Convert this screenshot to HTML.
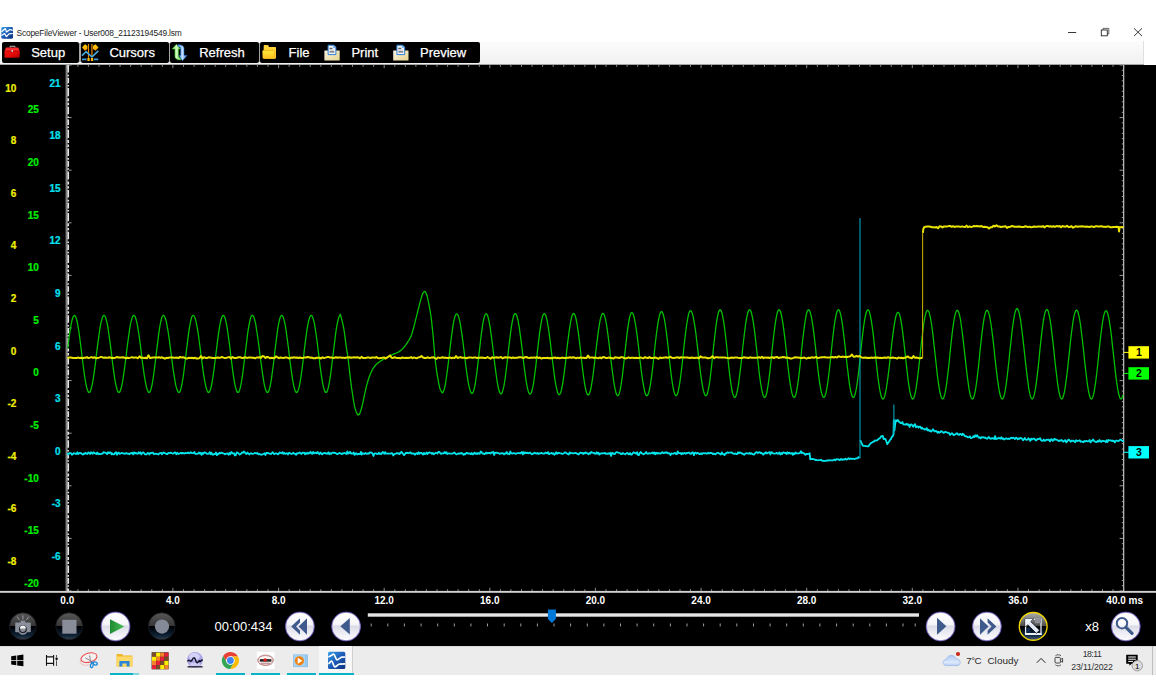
<!DOCTYPE html>
<html lang="en"><head><meta charset="utf-8"><title>ScopeFileViewer - User008_21123194549.lsm</title>
<style>
html,body{margin:0;padding:0;background:#fff;}
body{width:1156px;height:700px;overflow:hidden;position:relative;font-family:"Liberation Sans",sans-serif;}
#root{position:absolute;left:0;top:0;width:1156px;height:700px;overflow:hidden;background:#fff;}
#root div, #root span{position:absolute;white-space:nowrap;}
.tb{background:#000;border-radius:2px;top:1px;height:21px;}
.tbt{color:#fff;font-size:13px;line-height:13px;top:45.8px;-webkit-text-stroke:0.25px #fff;}
.axl{font-weight:bold;font-size:10px;line-height:10px;text-align:right;-webkit-text-stroke:0.2px currentColor;}
.xl{font-weight:bold;font-size:10px;line-height:10px;color:#fff;top:596.2px;text-align:center;width:60px;}
.ul{background:#08b4c4;height:1.6px;top:673px;}
svg{position:absolute;left:0;top:0;}
</style></head><body><div id="root">
<span style="left:16.5px;top:29.2px;font-size:8.4px;line-height:9px;color:#1c1c1c;letter-spacing:-0.18px" id="title">ScopeFileViewer - User008_21123194549.lsm</span>
<div style="left:0;top:41px;width:1142.6px;height:23.5px;background:linear-gradient(#fcfcfc,#f0f0f0);border-right:1px solid #e0e0e0;"></div>
<div style="left:0;top:64.2px;width:1143.6px;height:1px;background:#a4a4a4;"></div>
<div class="tb" style="left:2.0px;width:77.3px;top:42px;height:21px"></div>
<div class="tb" style="left:80.6px;width:88.2px;top:42px;height:21px"></div>
<div class="tb" style="left:170.0px;width:88.5px;top:42px;height:21px"></div>
<div class="tb" style="left:259.8px;width:220.0px;top:42px;height:21px"></div>
<div style="left:79.3px;width:1.3px;top:43px;height:19px;background:#a4a4a4"></div>
<div style="left:168.8px;width:1.2px;top:43px;height:19px;background:#a4a4a4"></div>
<div style="left:258.5px;width:1.3px;top:43px;height:19px;background:#a4a4a4"></div>
<span class="tbt" style="left:31.2px">Setup</span>
<span class="tbt" style="left:109.4px">Cursors</span>
<span class="tbt" style="left:199.2px">Refresh</span>
<span class="tbt" style="left:288.6px">File</span>
<span class="tbt" style="left:351.4px">Print</span>
<span class="tbt" style="left:420.0px">Preview</span>
<div style="left:0;top:65px;width:1156px;height:581px;background:#000;"></div>
<div style="left:0;top:646px;width:1156px;height:28.6px;background:#ececec;"></div>
<div style="left:0;top:646px;width:1156px;height:1px;background:#dcdcdc;"></div>
<div style="left:319px;top:646px;width:32.5px;height:28.6px;background:#f7f7f7;border-right:1px solid #d0d0d0;"></div>
<div class="ul" style="left:109.8px;width:28.8px"></div>
<div class="ul" style="left:215.9px;width:28.9px"></div>
<div class="ul" style="left:251.3px;width:28.8px"></div>
<div class="ul" style="left:286.9px;width:28.8px"></div>
<div class="ul" style="left:319.0px;width:34.7px"></div>
<div class="ul" style="left:133px;width:5.6px;background:#7fd8e0"></div>
<div style="left:1152px;top:646px;width:1px;height:28.6px;background:#bdbdbd;"></div>
<span class="axl" style="left:-23.6px;width:40px;top:83.5px;color:#f0f000">10</span>
<span class="axl" style="left:-23.6px;width:40px;top:136.1px;color:#f0f000">8</span>
<span class="axl" style="left:-23.6px;width:40px;top:188.7px;color:#f0f000">6</span>
<span class="axl" style="left:-23.6px;width:40px;top:241.3px;color:#f0f000">4</span>
<span class="axl" style="left:-23.6px;width:40px;top:293.9px;color:#f0f000">2</span>
<span class="axl" style="left:-23.6px;width:40px;top:346.5px;color:#f0f000">0</span>
<span class="axl" style="left:-23.6px;width:40px;top:399.1px;color:#f0f000">-2</span>
<span class="axl" style="left:-23.6px;width:40px;top:451.7px;color:#f0f000">-4</span>
<span class="axl" style="left:-23.6px;width:40px;top:504.3px;color:#f0f000">-6</span>
<span class="axl" style="left:-23.6px;width:40px;top:556.9px;color:#f0f000">-8</span>
<span class="axl" style="left:-1.2px;width:40px;top:105.3px;color:#00f000">25</span>
<span class="axl" style="left:-1.2px;width:40px;top:157.9px;color:#00f000">20</span>
<span class="axl" style="left:-1.2px;width:40px;top:210.5px;color:#00f000">15</span>
<span class="axl" style="left:-1.2px;width:40px;top:263.1px;color:#00f000">10</span>
<span class="axl" style="left:-1.2px;width:40px;top:315.7px;color:#00f000">5</span>
<span class="axl" style="left:-1.2px;width:40px;top:368.3px;color:#00f000">0</span>
<span class="axl" style="left:-1.2px;width:40px;top:420.9px;color:#00f000">-5</span>
<span class="axl" style="left:-1.2px;width:40px;top:473.5px;color:#00f000">-10</span>
<span class="axl" style="left:-1.2px;width:40px;top:526.1px;color:#00f000">-15</span>
<span class="axl" style="left:-1.2px;width:40px;top:578.7px;color:#00f000">-20</span>
<span class="axl" style="left:20.6px;width:40px;top:78.5px;color:#00e0f0">21</span>
<span class="axl" style="left:20.6px;width:40px;top:131.1px;color:#00e0f0">18</span>
<span class="axl" style="left:20.6px;width:40px;top:183.7px;color:#00e0f0">15</span>
<span class="axl" style="left:20.6px;width:40px;top:236.3px;color:#00e0f0">12</span>
<span class="axl" style="left:20.6px;width:40px;top:288.9px;color:#00e0f0">9</span>
<span class="axl" style="left:20.6px;width:40px;top:341.5px;color:#00e0f0">6</span>
<span class="axl" style="left:20.6px;width:40px;top:394.1px;color:#00e0f0">3</span>
<span class="axl" style="left:20.6px;width:40px;top:446.7px;color:#00e0f0">0</span>
<span class="axl" style="left:20.6px;width:40px;top:499.3px;color:#00e0f0">-3</span>
<span class="axl" style="left:20.6px;width:40px;top:551.9px;color:#00e0f0">-6</span>
<span class="xl" style="left:37.3px">0.0</span>
<span class="xl" style="left:142.9px">4.0</span>
<span class="xl" style="left:248.6px">8.0</span>
<span class="xl" style="left:354.2px">12.0</span>
<span class="xl" style="left:459.8px">16.0</span>
<span class="xl" style="left:565.4px">20.0</span>
<span class="xl" style="left:671.1px">24.0</span>
<span class="xl" style="left:776.7px">28.0</span>
<span class="xl" style="left:882.3px">32.0</span>
<span class="xl" style="left:988.0px">36.0</span>
<span class="xl" style="left:1084.7px;width:80px">40.0 ms</span>
<span style="left:214.6px;top:620.4px;font-size:13px;line-height:13px;color:#fff">00:00:434</span>
<span style="left:1085.2px;top:620.4px;font-size:13px;line-height:13px;color:#fff">x8</span>
<span id="wx1" style="left:966.3px;top:655.7px;font-size:9.8px;line-height:10px;color:#2a2a2a;letter-spacing:-0.55px">7°C</span>
<span id="wx2" style="left:987.4px;top:655.7px;font-size:9.9px;line-height:10px;color:#2a2a2a;letter-spacing:0.08px">Cloudy</span>
<span id="clk" style="left:1062px;width:60px;text-align:center;top:649.5px;font-size:8.7px;line-height:9px;color:#303030;letter-spacing:-0.52px">18:11</span>
<span id="dat" style="left:1062px;width:60px;text-align:center;top:662.9px;font-size:8.7px;line-height:9px;color:#303030;letter-spacing:-0.13px">23/11/2022</span>
<svg width="1156" height="700" viewBox="0 0 1156 700">
<defs>
<linearGradient id="gw" x1="0" y1="0" x2="0" y2="1"><stop offset="0" stop-color="#ffffff"/><stop offset="0.42" stop-color="#f6f6fa"/><stop offset="0.5" stop-color="#dcdce8"/><stop offset="0.62" stop-color="#e6e6f0"/><stop offset="1" stop-color="#fdfdff"/></linearGradient>
<linearGradient id="gd" x1="0" y1="0" x2="0" y2="1"><stop offset="0" stop-color="#585858"/><stop offset="0.49" stop-color="#363636"/><stop offset="0.51" stop-color="#000"/><stop offset="0.62" stop-color="#020a14"/><stop offset="0.86" stop-color="#0e2438"/><stop offset="1" stop-color="#38424e"/></linearGradient>
<linearGradient id="gd2" x1="0" y1="0" x2="0" y2="1"><stop offset="0" stop-color="#b0b0b0"/><stop offset="0.48" stop-color="#4c4c4c"/><stop offset="0.5" stop-color="#000"/><stop offset="0.62" stop-color="#000a18"/><stop offset="0.85" stop-color="#14304e"/><stop offset="1" stop-color="#50607a"/></linearGradient>
<linearGradient id="gtray" x1="0" y1="0" x2="1" y2="1"><stop offset="0" stop-color="#fbf6e6"/><stop offset="0.5" stop-color="#f0e4b8"/><stop offset="1" stop-color="#e4d48c"/></linearGradient>
<linearGradient id="gdia" x1="0" y1="0" x2="0" y2="1"><stop offset="0" stop-color="#ffd800"/><stop offset="1" stop-color="#ff9400"/></linearGradient>
<linearGradient id="ggr" x1="0" y1="0" x2="1" y2="0"><stop offset="0" stop-color="#58d838"/><stop offset="0.5" stop-color="#d4fcc0"/><stop offset="1" stop-color="#58d038"/></linearGradient>
<linearGradient id="gbl" x1="0" y1="0" x2="1" y2="0"><stop offset="0" stop-color="#3a92f0"/><stop offset="0.5" stop-color="#c4deff"/><stop offset="1" stop-color="#3a8af0"/></linearGradient>
<linearGradient id="gredh" x1="0" y1="0" x2="1" y2="1"><stop offset="0" stop-color="#f41414"/><stop offset="0.6" stop-color="#e00808"/><stop offset="1" stop-color="#a40000"/></linearGradient>
<linearGradient id="gcloud" x1="0" y1="0" x2="0" y2="1"><stop offset="0" stop-color="#b0c8f2"/><stop offset="0.7" stop-color="#dde9fb"/><stop offset="1" stop-color="#b4ccf4"/></linearGradient>
<linearGradient id="gg" x1="0" y1="0" x2="1" y2="0"><stop offset="0" stop-color="#1f8a30"/><stop offset="1" stop-color="#46c058"/></linearGradient>
<linearGradient id="gapp" x1="0" y1="0" x2="1" y2="1"><stop offset="0" stop-color="#3aa0e8"/><stop offset="0.5" stop-color="#1c5cb8"/><stop offset="1" stop-color="#10307c"/></linearGradient>
<linearGradient id="gfold" x1="0" y1="0" x2="0" y2="1"><stop offset="0" stop-color="#ffec3c"/><stop offset="1" stop-color="#ffbc1c"/></linearGradient>
<linearGradient id="gred" x1="0" y1="0" x2="0" y2="1"><stop offset="0" stop-color="#ff3030"/><stop offset="1" stop-color="#b00000"/></linearGradient>
</defs>
<path d="M67.3 65V68.2M67.3 591V587.8M77.9 65V66.8M77.9 591V589.2M88.4 65V66.8M88.4 591V589.2M99.0 65V66.8M99.0 591V589.2M109.6 65V66.8M109.6 591V589.2M120.1 65V66.8M120.1 591V589.2M130.7 65V66.8M130.7 591V589.2M141.2 65V66.8M141.2 591V589.2M151.8 65V66.8M151.8 591V589.2M162.4 65V66.8M162.4 591V589.2M172.9 65V68.2M172.9 591V587.8M183.5 65V66.8M183.5 591V589.2M194.1 65V66.8M194.1 591V589.2M204.6 65V66.8M204.6 591V589.2M215.2 65V66.8M215.2 591V589.2M225.7 65V66.8M225.7 591V589.2M236.3 65V66.8M236.3 591V589.2M246.9 65V66.8M246.9 591V589.2M257.4 65V66.8M257.4 591V589.2M268.0 65V66.8M268.0 591V589.2M278.6 65V68.2M278.6 591V587.8M289.1 65V66.8M289.1 591V589.2M299.7 65V66.8M299.7 591V589.2M310.2 65V66.8M310.2 591V589.2M320.8 65V66.8M320.8 591V589.2M331.4 65V66.8M331.4 591V589.2M341.9 65V66.8M341.9 591V589.2M352.5 65V66.8M352.5 591V589.2M363.1 65V66.8M363.1 591V589.2M373.6 65V66.8M373.6 591V589.2M384.2 65V68.2M384.2 591V587.8M394.8 65V66.8M394.8 591V589.2M405.3 65V66.8M405.3 591V589.2M415.9 65V66.8M415.9 591V589.2M426.4 65V66.8M426.4 591V589.2M437.0 65V66.8M437.0 591V589.2M447.6 65V66.8M447.6 591V589.2M458.1 65V66.8M458.1 591V589.2M468.7 65V66.8M468.7 591V589.2M479.3 65V66.8M479.3 591V589.2M489.8 65V68.2M489.8 591V587.8M500.4 65V66.8M500.4 591V589.2M510.9 65V66.8M510.9 591V589.2M521.5 65V66.8M521.5 591V589.2M532.1 65V66.8M532.1 591V589.2M542.6 65V66.8M542.6 591V589.2M553.2 65V66.8M553.2 591V589.2M563.8 65V66.8M563.8 591V589.2M574.3 65V66.8M574.3 591V589.2M584.9 65V66.8M584.9 591V589.2M595.4 65V68.2M595.4 591V587.8M606.0 65V66.8M606.0 591V589.2M616.6 65V66.8M616.6 591V589.2M627.1 65V66.8M627.1 591V589.2M637.7 65V66.8M637.7 591V589.2M648.3 65V66.8M648.3 591V589.2M658.8 65V66.8M658.8 591V589.2M669.4 65V66.8M669.4 591V589.2M680.0 65V66.8M680.0 591V589.2M690.5 65V66.8M690.5 591V589.2M701.1 65V68.2M701.1 591V587.8M711.6 65V66.8M711.6 591V589.2M722.2 65V66.8M722.2 591V589.2M732.8 65V66.8M732.8 591V589.2M743.3 65V66.8M743.3 591V589.2M753.9 65V66.8M753.9 591V589.2M764.5 65V66.8M764.5 591V589.2M775.0 65V66.8M775.0 591V589.2M785.6 65V66.8M785.6 591V589.2M796.1 65V66.8M796.1 591V589.2M806.7 65V68.2M806.7 591V587.8M817.3 65V66.8M817.3 591V589.2M827.8 65V66.8M827.8 591V589.2M838.4 65V66.8M838.4 591V589.2M849.0 65V66.8M849.0 591V589.2M859.5 65V66.8M859.5 591V589.2M870.1 65V66.8M870.1 591V589.2M880.7 65V66.8M880.7 591V589.2M891.2 65V66.8M891.2 591V589.2M901.8 65V66.8M901.8 591V589.2M912.3 65V68.2M912.3 591V587.8M922.9 65V66.8M922.9 591V589.2M933.5 65V66.8M933.5 591V589.2M944.0 65V66.8M944.0 591V589.2M954.6 65V66.8M954.6 591V589.2M965.2 65V66.8M965.2 591V589.2M975.7 65V66.8M975.7 591V589.2M986.3 65V66.8M986.3 591V589.2M996.8 65V66.8M996.8 591V589.2M1007.4 65V66.8M1007.4 591V589.2M1018.0 65V68.2M1018.0 591V587.8M1028.5 65V66.8M1028.5 591V589.2M1039.1 65V66.8M1039.1 591V589.2M1049.7 65V66.8M1049.7 591V589.2M1060.2 65V66.8M1060.2 591V589.2M1070.8 65V66.8M1070.8 591V589.2M1081.3 65V66.8M1081.3 591V589.2M1091.9 65V66.8M1091.9 591V589.2M1102.5 65V66.8M1102.5 591V589.2M1113.0 65V66.8M1113.0 591V589.2M1123.6 65V68.2M1123.6 591V587.8" stroke="#8a8a8a" stroke-width="1" fill="none"/>
<path d="M1123.6 65.0H1119.6M1123.6 70.3H1121.8M1123.6 75.5H1121.8M1123.6 80.8H1121.8M1123.6 86.0H1121.8M1123.6 91.3H1121.8M1123.6 96.6H1121.8M1123.6 101.8H1121.8M1123.6 107.1H1121.8M1123.6 112.3H1121.8M1123.6 117.6H1119.6M1123.6 122.9H1121.8M1123.6 128.1H1121.8M1123.6 133.4H1121.8M1123.6 138.6H1121.8M1123.6 143.9H1121.8M1123.6 149.2H1121.8M1123.6 154.4H1121.8M1123.6 159.7H1121.8M1123.6 164.9H1121.8M1123.6 170.2H1119.6M1123.6 175.5H1121.8M1123.6 180.7H1121.8M1123.6 186.0H1121.8M1123.6 191.2H1121.8M1123.6 196.5H1121.8M1123.6 201.8H1121.8M1123.6 207.0H1121.8M1123.6 212.3H1121.8M1123.6 217.5H1121.8M1123.6 222.8H1119.6M1123.6 228.1H1121.8M1123.6 233.3H1121.8M1123.6 238.6H1121.8M1123.6 243.8H1121.8M1123.6 249.1H1121.8M1123.6 254.4H1121.8M1123.6 259.6H1121.8M1123.6 264.9H1121.8M1123.6 270.1H1121.8M1123.6 275.4H1119.6M1123.6 280.7H1121.8M1123.6 285.9H1121.8M1123.6 291.2H1121.8M1123.6 296.4H1121.8M1123.6 301.7H1121.8M1123.6 307.0H1121.8M1123.6 312.2H1121.8M1123.6 317.5H1121.8M1123.6 322.7H1121.8M1123.6 328.0H1119.6M1123.6 333.3H1121.8M1123.6 338.5H1121.8M1123.6 343.8H1121.8M1123.6 349.0H1121.8M1123.6 354.3H1121.8M1123.6 359.6H1121.8M1123.6 364.8H1121.8M1123.6 370.1H1121.8M1123.6 375.3H1121.8M1123.6 380.6H1119.6M1123.6 385.9H1121.8M1123.6 391.1H1121.8M1123.6 396.4H1121.8M1123.6 401.6H1121.8M1123.6 406.9H1121.8M1123.6 412.2H1121.8M1123.6 417.4H1121.8M1123.6 422.7H1121.8M1123.6 427.9H1121.8M1123.6 433.2H1119.6M1123.6 438.5H1121.8M1123.6 443.7H1121.8M1123.6 449.0H1121.8M1123.6 454.2H1121.8M1123.6 459.5H1121.8M1123.6 464.8H1121.8M1123.6 470.0H1121.8M1123.6 475.3H1121.8M1123.6 480.5H1121.8M1123.6 485.8H1119.6M1123.6 491.1H1121.8M1123.6 496.3H1121.8M1123.6 501.6H1121.8M1123.6 506.8H1121.8M1123.6 512.1H1121.8M1123.6 517.4H1121.8M1123.6 522.6H1121.8M1123.6 527.9H1121.8M1123.6 533.1H1121.8M1123.6 538.4H1119.6M1123.6 543.7H1121.8M1123.6 548.9H1121.8M1123.6 554.2H1121.8M1123.6 559.4H1121.8M1123.6 564.7H1121.8M1123.6 570.0H1121.8M1123.6 575.2H1121.8M1123.6 580.5H1121.8M1123.6 585.7H1121.8M1123.6 591.0H1119.6" stroke="#9a9a9a" stroke-width="1" fill="none"/>
<rect x="1123" y="65" width="1.3" height="527" fill="#b4b4b4"/>
<rect x="65.6" y="65" width="1.1" height="527" fill="#8a8a8a"/>
<rect x="66.7" y="65" width="0.8" height="527" fill="#c8c8c8"/>
<path d="M68.25 65.0V72.5M68.25 74.7V76.3M68.25 77.7V83.3M68.25 84.9V86.4M68.25 88.0V96.2M68.25 98.2V101.2M68.25 102.8V105.2M68.25 106.7V114.2M68.25 116.4V118.0M68.25 119.4V125.0M68.25 126.6V128.1M68.25 129.7V137.9M68.25 139.9V142.9M68.25 144.5V146.9M68.25 148.4V155.9M68.25 158.1V159.7M68.25 161.1V166.7M68.25 168.3V169.8M68.25 171.4V179.6M68.25 181.6V184.6M68.25 186.2V188.6M68.25 190.1V197.6M68.25 199.8V201.4M68.25 202.8V208.4M68.25 210.0V211.5M68.25 213.1V221.3M68.25 223.3V226.3M68.25 227.9V230.3M68.25 231.8V239.3M68.25 241.5V243.1M68.25 244.5V250.1M68.25 251.7V253.2M68.25 254.8V263.0M68.25 265.0V268.0M68.25 269.6V272.0M68.25 273.5V281.0M68.25 283.2V284.8M68.25 286.2V291.8M68.25 293.4V294.9M68.25 296.5V304.7M68.25 306.7V309.7M68.25 311.3V313.7M68.25 315.2V322.7M68.25 324.9V326.5M68.25 327.9V333.5M68.25 335.1V336.6M68.25 338.2V346.4M68.25 348.4V351.4M68.25 353.0V355.4M68.25 356.9V364.4M68.25 366.6V368.2M68.25 369.6V375.2M68.25 376.8V378.3M68.25 379.9V388.1M68.25 390.1V393.1M68.25 394.7V397.1M68.25 398.6V406.1M68.25 408.3V409.9M68.25 411.3V416.9M68.25 418.5V420.0M68.25 421.6V429.8M68.25 431.8V434.8M68.25 436.4V438.8M68.25 440.3V447.8M68.25 450.0V451.6M68.25 453.0V458.6M68.25 460.2V461.7M68.25 463.3V471.5M68.25 473.5V476.5M68.25 478.1V480.5M68.25 482.0V489.5M68.25 491.7V493.3M68.25 494.7V500.3M68.25 501.9V503.4M68.25 505.0V513.2M68.25 515.2V518.2M68.25 519.8V522.2M68.25 523.7V531.2M68.25 533.4V535.0M68.25 536.4V542.0M68.25 543.6V545.1M68.25 546.7V554.9M68.25 556.9V559.9M68.25 561.5V563.9M68.25 565.4V572.9M68.25 575.1V576.7M68.25 578.1V583.7M68.25 585.3V586.8M68.25 588.4V591.0" stroke="#e4e4e4" stroke-width="1.6" fill="none"/>
<path d="M69 65.0H71.6M69 117.6H71.6M69 170.2H71.6M69 222.8H71.6M69 275.4H71.6M69 328.0H71.6M69 380.6H71.6M69 433.2H71.6M69 485.8H71.6M69 538.4H71.6M69 591.0H71.6" stroke="#999" stroke-width="1" fill="none"/>
<rect x="0" y="590.9" width="1156" height="1.9" fill="#d2d2d2"/>
<path d="M67.7 348.4 L68.4 343.0 L69.0 337.9 L69.7 333.0 L70.4 328.6 L71.1 324.7 L71.8 321.4 L72.4 318.8 L73.1 316.9 L73.8 315.7 L74.5 315.3 L75.1 315.7 L75.8 317.0 L76.5 319.1 L77.2 322.0 L77.9 325.6 L78.6 329.8 L79.3 334.6 L80.0 339.8 L80.7 345.3 L81.4 351.0 L82.1 356.8 L82.8 362.5 L83.5 368.0 L84.2 373.2 L84.9 378.0 L85.6 382.2 L86.3 385.8 L87.0 388.7 L87.7 390.8 L88.4 392.1 L89.1 392.5 L89.8 392.1 L90.5 390.9 L91.1 389.0 L91.8 386.4 L92.5 383.1 L93.2 379.2 L93.8 374.8 L94.5 369.9 L95.2 364.8 L95.9 359.4 L96.5 353.9 L97.2 348.4 L97.9 343.0 L98.6 337.9 L99.3 333.0 L99.9 328.6 L100.6 324.7 L101.3 321.4 L102.0 318.8 L102.6 316.9 L103.3 315.7 L104.0 315.3 L104.7 315.7 L105.4 316.9 L106.0 318.8 L106.7 321.4 L107.4 324.7 L108.1 328.6 L108.7 333.0 L109.4 337.9 L110.1 343.0 L110.8 348.4 L111.5 353.9 L112.1 359.4 L112.8 364.8 L113.5 369.9 L114.2 374.8 L114.8 379.2 L115.5 383.1 L116.2 386.4 L116.9 389.0 L117.5 390.9 L118.2 392.1 L118.9 392.5 L119.6 392.1 L120.3 390.9 L120.9 389.0 L121.6 386.4 L122.3 383.1 L123.0 379.2 L123.6 374.8 L124.3 369.9 L125.0 364.8 L125.7 359.4 L126.4 353.9 L127.0 348.4 L127.7 343.0 L128.4 337.9 L129.1 333.0 L129.7 328.6 L130.4 324.7 L131.1 321.4 L131.8 318.8 L132.4 316.9 L133.1 315.7 L133.8 315.3 L134.5 315.7 L135.2 316.9 L135.9 318.8 L136.6 321.4 L137.3 324.7 L138.0 328.6 L138.7 333.0 L139.4 337.9 L140.1 343.0 L140.8 348.4 L141.4 353.9 L142.1 359.4 L142.8 364.8 L143.5 369.9 L144.2 374.8 L144.9 379.2 L145.6 383.1 L146.3 386.4 L147.0 389.0 L147.7 390.9 L148.4 392.1 L149.1 392.5 L149.8 392.1 L150.5 390.8 L151.1 388.7 L151.8 385.8 L152.5 382.2 L153.2 378.0 L153.9 373.2 L154.5 368.0 L155.2 362.5 L155.9 356.8 L156.6 351.0 L157.3 345.3 L158.0 339.8 L158.6 334.6 L159.3 329.8 L160.0 325.6 L160.7 322.0 L161.4 319.1 L162.0 317.0 L162.7 315.7 L163.4 315.3 L164.1 315.7 L164.7 316.7 L165.4 318.5 L166.1 320.9 L166.8 324.0 L167.4 327.6 L168.1 331.6 L168.8 336.1 L169.5 341.0 L170.1 346.0 L170.8 351.3 L171.5 356.5 L172.2 361.8 L172.8 366.8 L173.5 371.7 L174.2 376.2 L174.9 380.2 L175.5 383.8 L176.2 386.9 L176.9 389.3 L177.6 391.1 L178.2 392.1 L178.9 392.5 L179.6 392.1 L180.3 390.8 L180.9 388.7 L181.6 385.8 L182.3 382.2 L183.0 378.0 L183.7 373.2 L184.3 368.0 L185.0 362.5 L185.7 356.8 L186.4 351.0 L187.1 345.3 L187.8 339.8 L188.4 334.6 L189.1 329.8 L189.8 325.6 L190.5 322.0 L191.2 319.1 L191.8 317.0 L192.5 315.7 L193.2 315.3 L193.9 315.7 L194.5 316.7 L195.2 318.5 L195.9 320.9 L196.5 324.0 L197.2 327.6 L197.9 331.6 L198.6 336.1 L199.2 341.0 L199.9 346.0 L200.6 351.3 L201.2 356.5 L201.9 361.8 L202.6 366.8 L203.2 371.7 L203.9 376.2 L204.6 380.2 L205.3 383.8 L205.9 386.9 L206.6 389.3 L207.3 391.1 L207.9 392.1 L208.6 392.5 L209.3 392.1 L210.0 390.8 L210.7 388.7 L211.4 385.8 L212.1 382.2 L212.8 378.0 L213.5 373.2 L214.2 368.0 L214.9 362.5 L215.6 356.8 L216.3 351.0 L217.0 345.3 L217.7 339.8 L218.4 334.6 L219.1 329.8 L219.8 325.6 L220.5 322.0 L221.2 319.1 L221.9 317.0 L222.6 315.7 L223.2 315.3 L223.9 315.7 L224.6 316.9 L225.3 318.8 L225.9 321.4 L226.6 324.7 L227.3 328.6 L227.9 333.0 L228.6 337.9 L229.3 343.0 L230.0 348.4 L230.6 353.9 L231.3 359.4 L232.0 364.8 L232.6 369.9 L233.3 374.8 L234.0 379.2 L234.6 383.1 L235.3 386.4 L236.0 389.0 L236.7 390.9 L237.3 392.1 L238.0 392.5 L238.7 392.1 L239.4 390.8 L240.0 388.7 L240.7 385.8 L241.4 382.2 L242.1 378.0 L242.8 373.2 L243.4 368.0 L244.1 362.5 L244.8 356.8 L245.5 351.0 L246.2 345.3 L246.9 339.8 L247.5 334.6 L248.2 329.8 L248.9 325.6 L249.6 322.0 L250.3 319.1 L250.9 317.0 L251.6 315.7 L252.3 315.3 L253.0 315.7 L253.7 316.9 L254.4 318.8 L255.1 321.4 L255.8 324.7 L256.4 328.6 L257.1 333.0 L257.8 337.9 L258.5 343.0 L259.2 348.4 L259.9 353.9 L260.6 359.4 L261.3 364.8 L262.0 369.9 L262.7 374.8 L263.4 379.2 L264.0 383.1 L264.7 386.4 L265.4 389.0 L266.1 390.9 L266.8 392.1 L267.5 392.5 L268.2 392.1 L268.9 390.8 L269.5 388.7 L270.2 385.8 L270.9 382.2 L271.6 378.0 L272.2 373.2 L272.9 368.0 L273.6 362.5 L274.3 356.8 L274.9 351.0 L275.6 345.3 L276.3 339.8 L277.0 334.6 L277.6 329.8 L278.3 325.6 L279.0 322.0 L279.7 319.1 L280.3 317.0 L281.0 315.7 L281.7 315.3 L282.4 315.7 L283.1 316.9 L283.7 318.8 L284.4 321.4 L285.1 324.7 L285.8 328.6 L286.4 333.0 L287.1 337.9 L287.8 343.0 L288.5 348.4 L289.1 353.9 L289.8 359.4 L290.5 364.8 L291.2 369.9 L291.9 374.8 L292.5 379.2 L293.2 383.1 L293.9 386.4 L294.6 389.0 L295.2 390.9 L295.9 392.1 L296.6 392.5 L297.3 392.1 L298.0 390.8 L298.7 388.7 L299.4 385.8 L300.1 382.2 L300.8 378.0 L301.5 373.2 L302.2 368.0 L302.9 362.5 L303.6 356.8 L304.2 351.0 L304.9 345.3 L305.6 339.8 L306.3 334.6 L307.0 329.8 L307.7 325.6 L308.4 322.0 L309.1 319.1 L309.8 317.0 L310.5 315.7 L311.2 315.3 L311.9 315.7 L312.5 316.9 L313.2 318.8 L313.9 321.4 L314.6 324.7 L315.2 328.6 L315.9 333.0 L316.6 337.9 L317.3 343.0 L317.9 348.4 L318.6 353.9 L319.3 359.4 L319.9 364.8 L320.6 369.9 L321.3 374.8 L322.0 379.2 L322.6 383.1 L323.3 386.4 L324.0 389.0 L324.7 390.9 L325.3 392.1 L326.0 392.5 L326.7 392.1 L327.4 390.8 L328.0 388.7 L328.7 385.8 L329.4 382.2 L330.1 378.0 L330.8 373.2 L331.4 368.0 L332.1 362.5 L332.8 356.8 L333.5 351.0 L334.2 345.3 L334.9 339.8 L335.5 334.6 L336.2 329.8 L336.9 325.6 L337.6 322.0 L338.3 319.1 L338.9 317.0 L339.6 315.7 L340.3 314.2 L340.7 315.5 L341.1 317.2 L341.7 319.3 L342.3 321.6 L342.9 324.2 L343.5 327.0 L344.0 330.2 L344.6 333.9 L345.1 337.9 L345.6 341.8 L346.1 345.4 L346.5 348.4 L346.8 350.5 L347.1 351.8 L347.2 352.8 L347.4 353.8 L347.7 355.3 L348.0 357.7 L348.4 361.1 L348.9 365.3 L349.4 369.9 L349.9 374.7 L350.5 379.4 L351.0 383.6 L351.5 387.5 L352.1 391.4 L352.7 395.1 L353.2 398.6 L353.7 401.7 L354.2 404.3 L354.6 406.4 L355.0 408.0 L355.3 409.3 L355.6 410.3 L356.0 411.1 L356.3 412.0 L356.6 412.8 L357.0 413.6 L357.3 414.2 L357.6 414.6 L358.0 414.9 L358.3 415.0 L358.6 414.9 L359.0 414.6 L359.3 414.2 L359.6 413.6 L360.0 412.8 L360.3 412.0 L360.6 411.1 L360.9 410.2 L361.3 409.1 L361.6 407.9 L362.0 406.3 L362.5 404.3 L363.1 401.7 L363.7 398.6 L364.4 395.2 L365.2 391.8 L365.9 388.5 L366.6 385.6 L367.3 383.1 L368.0 380.8 L368.6 378.7 L369.3 376.7 L370.0 374.9 L370.7 373.2 L371.4 371.7 L372.1 370.3 L372.7 369.1 L373.4 368.0 L374.1 367.0 L374.9 366.0 L375.7 365.1 L376.5 364.2 L377.3 363.5 L378.2 362.8 L379.1 362.1 L380.0 361.4 L381.0 360.7 L382.0 360.1 L383.1 359.5 L384.2 358.9 L385.2 358.3 L386.3 357.7 L387.3 357.1 L388.4 356.6 L389.4 356.1 L390.4 355.6 L391.5 355.1 L392.5 354.6 L393.6 354.1 L394.6 353.7 L395.7 353.3 L396.8 352.8 L397.8 352.4 L398.7 351.9 L399.5 351.4 L400.3 350.9 L400.9 350.3 L401.6 349.7 L402.2 349.1 L402.9 348.4 L403.6 347.7 L404.3 346.9 L405.0 346.0 L405.6 345.2 L406.3 344.2 L407.0 343.2 L407.7 342.1 L408.4 341.0 L409.1 339.9 L409.8 338.6 L410.5 337.3 L411.1 335.9 L411.7 334.4 L412.2 332.8 L412.7 331.1 L413.2 329.3 L413.7 327.5 L414.2 325.6 L414.7 323.6 L415.2 321.6 L415.7 319.5 L416.3 317.3 L416.8 315.2 L417.3 313.1 L417.8 311.0 L418.4 308.7 L419.0 306.5 L419.5 304.4 L420.0 302.4 L420.5 300.7 L420.9 299.2 L421.3 297.9 L421.6 296.8 L421.9 295.8 L422.2 294.9 L422.5 294.1 L422.9 293.4 L423.2 292.7 L423.6 292.2 L423.9 291.8 L424.3 291.5 L424.6 291.4 L424.9 291.4 L425.2 291.6 L425.4 292.0 L425.7 292.4 L425.9 292.9 L426.2 293.5 L426.4 294.0 L426.6 294.6 L426.9 295.1 L427.1 295.9 L427.4 297.0 L427.7 298.6 L428.1 300.7 L428.7 303.2 L429.2 306.1 L429.8 309.1 L430.3 312.2 L430.8 315.2 L431.2 318.1 L431.6 321.1 L431.9 324.1 L432.2 327.2 L432.6 330.5 L432.9 333.9 L433.3 337.7 L433.6 341.8 L434.0 346.0 L434.3 350.2 L434.7 354.2 L435.0 357.7 L435.3 360.8 L435.6 363.5 L436.0 366.0 L436.3 368.4 L436.6 370.8 L437.0 373.2 L437.4 375.8 L437.9 378.5 L438.3 381.1 L438.8 383.6 L439.3 385.8 L439.7 387.7 L440.2 389.2 L440.6 390.3 L441.1 391.2 L441.6 391.9 L441.9 392.4 L442.2 392.9 L442.9 392.5 L443.6 391.1 L444.3 389.0 L445.0 386.0 L445.7 382.3 L446.3 378.0 L447.0 373.1 L447.7 367.8 L448.4 362.2 L449.1 356.3 L449.8 350.4 L450.5 344.5 L451.2 338.9 L451.9 333.6 L452.6 328.7 L453.2 324.4 L453.9 320.7 L454.6 317.7 L455.3 315.6 L456.0 314.2 L456.7 313.8 L457.4 314.2 L458.1 315.4 L458.8 317.4 L459.5 320.1 L460.2 323.5 L460.9 327.6 L461.6 332.1 L462.3 337.1 L463.0 342.4 L463.7 348.0 L464.4 353.6 L465.0 359.3 L465.7 364.9 L466.4 370.2 L467.1 375.2 L467.8 379.7 L468.5 383.8 L469.2 387.2 L469.9 389.9 L470.6 391.9 L471.3 393.1 L472.0 393.5 L472.7 393.1 L473.3 391.7 L474.0 389.5 L474.7 386.6 L475.4 382.9 L476.0 378.5 L476.7 373.6 L477.4 368.2 L478.0 362.5 L478.7 356.6 L479.4 350.6 L480.1 344.7 L480.7 339.0 L481.4 333.7 L482.1 328.7 L482.7 324.4 L483.4 320.6 L484.1 317.7 L484.8 315.5 L485.4 314.2 L486.1 313.7 L486.8 314.1 L487.5 315.3 L488.1 317.3 L488.8 320.1 L489.5 323.5 L490.2 327.6 L490.8 332.1 L491.5 337.1 L492.2 342.5 L492.9 348.1 L493.6 353.8 L494.2 359.5 L494.9 365.1 L495.6 370.4 L496.3 375.5 L496.9 380.0 L497.6 384.1 L498.3 387.5 L499.0 390.3 L499.6 392.3 L500.3 393.5 L501.0 393.9 L501.7 393.4 L502.4 392.1 L503.0 389.9 L503.7 386.9 L504.4 383.2 L505.1 378.8 L505.7 373.8 L506.4 368.4 L507.1 362.7 L507.8 356.8 L508.4 350.8 L509.1 344.8 L509.8 339.1 L510.5 333.7 L511.1 328.7 L511.8 324.3 L512.5 320.6 L513.2 317.6 L513.8 315.4 L514.5 314.1 L515.2 313.6 L515.9 314.0 L516.6 315.3 L517.2 317.3 L517.9 320.0 L518.6 323.5 L519.3 327.6 L519.9 332.2 L520.6 337.2 L521.3 342.6 L522.0 348.2 L522.7 353.9 L523.3 359.7 L524.0 365.3 L524.7 370.7 L525.4 375.7 L526.0 380.3 L526.7 384.4 L527.4 387.9 L528.1 390.6 L528.7 392.6 L529.4 393.8 L530.1 394.3 L530.8 393.8 L531.4 392.5 L532.1 390.3 L532.8 387.2 L533.5 383.5 L534.1 379.1 L534.8 374.1 L535.5 368.6 L536.2 362.9 L536.8 356.9 L537.5 350.9 L538.2 344.9 L538.9 339.2 L539.5 333.7 L540.2 328.8 L540.9 324.3 L541.6 320.6 L542.2 317.6 L542.9 315.4 L543.6 314.0 L544.2 313.6 L544.9 314.0 L545.6 315.2 L546.3 317.2 L547.0 320.0 L547.6 323.5 L548.3 327.5 L549.0 332.2 L549.7 337.3 L550.4 342.7 L551.0 348.3 L551.7 354.1 L552.4 359.9 L553.1 365.5 L553.8 370.9 L554.4 376.0 L555.1 380.6 L555.8 384.7 L556.5 388.2 L557.2 391.0 L557.8 393.0 L558.5 394.2 L559.2 394.6 L559.9 394.2 L560.6 392.8 L561.3 390.6 L561.9 387.6 L562.6 383.8 L563.3 379.4 L564.0 374.3 L564.7 368.9 L565.4 363.1 L566.1 357.1 L566.7 351.0 L567.4 345.0 L568.1 339.2 L568.8 333.8 L569.5 328.8 L570.2 324.3 L570.9 320.5 L571.5 317.5 L572.2 315.3 L572.9 313.9 L573.6 313.5 L574.3 313.9 L575.0 315.3 L575.7 317.5 L576.4 320.6 L577.1 324.4 L577.8 328.8 L578.5 333.9 L579.2 339.4 L579.9 345.2 L580.6 351.2 L581.2 357.3 L581.9 363.3 L582.6 369.1 L583.3 374.6 L584.0 379.7 L584.7 384.1 L585.4 387.9 L586.1 391.0 L586.8 393.2 L587.5 394.5 L588.2 395.0 L588.9 394.6 L589.5 393.4 L590.2 391.3 L590.9 388.5 L591.5 385.0 L592.2 380.9 L592.9 376.3 L593.5 371.2 L594.2 365.7 L594.9 360.0 L595.5 354.2 L596.2 348.4 L596.9 342.7 L597.6 337.3 L598.2 332.1 L598.9 327.5 L599.6 323.4 L600.2 319.9 L600.9 317.1 L601.6 315.1 L602.2 313.8 L602.9 313.4 L603.6 313.8 L604.3 315.1 L604.9 317.1 L605.6 319.9 L606.3 323.5 L607.0 327.6 L607.6 332.3 L608.3 337.5 L609.0 343.0 L609.7 348.7 L610.3 354.6 L611.0 360.4 L611.7 366.2 L612.4 371.7 L613.1 376.8 L613.7 381.5 L614.4 385.7 L615.1 389.2 L615.8 392.0 L616.4 394.1 L617.1 395.3 L617.8 395.7 L618.5 395.3 L619.1 393.9 L619.8 391.6 L620.5 388.5 L621.1 384.6 L621.8 380.1 L622.5 375.0 L623.1 369.4 L623.8 363.4 L624.5 357.3 L625.1 351.1 L625.8 344.9 L626.5 339.0 L627.1 333.4 L627.8 328.3 L628.5 323.7 L629.1 319.8 L629.8 316.7 L630.5 314.5 L631.1 313.1 L631.8 312.6 L632.5 313.0 L633.2 314.3 L633.9 316.4 L634.5 319.2 L635.2 322.8 L635.9 327.0 L636.6 331.7 L637.3 336.9 L638.0 342.5 L638.7 348.3 L639.3 354.2 L640.0 360.1 L640.7 365.9 L641.4 371.5 L642.1 376.7 L642.8 381.4 L643.5 385.6 L644.2 389.2 L644.8 392.0 L645.5 394.1 L646.2 395.4 L646.9 395.8 L647.6 395.3 L648.3 393.9 L649.0 391.6 L649.7 388.5 L650.4 384.6 L651.1 380.0 L651.8 374.8 L652.5 369.1 L653.2 363.1 L653.9 356.9 L654.5 350.6 L655.2 344.3 L655.9 338.3 L656.6 332.7 L657.3 327.5 L658.0 322.9 L658.7 318.9 L659.4 315.8 L660.1 313.5 L660.8 312.1 L661.5 311.6 L662.2 312.1 L662.9 313.5 L663.6 315.8 L664.3 318.9 L665.0 322.9 L665.7 327.5 L666.4 332.7 L667.1 338.3 L667.8 344.3 L668.5 350.6 L669.1 356.9 L669.8 363.1 L670.5 369.1 L671.2 374.8 L671.9 380.0 L672.6 384.6 L673.3 388.5 L674.0 391.6 L674.7 393.9 L675.4 395.3 L676.1 395.8 L676.8 395.3 L677.5 393.9 L678.2 391.6 L678.8 388.4 L679.5 384.4 L680.2 379.8 L680.9 374.5 L681.6 368.8 L682.3 362.7 L683.0 356.4 L683.6 350.1 L684.3 343.8 L685.0 337.7 L685.7 332.0 L686.4 326.7 L687.1 322.0 L687.8 318.1 L688.4 314.9 L689.1 312.6 L689.8 311.1 L690.5 310.7 L691.2 311.1 L691.8 312.3 L692.5 314.2 L693.2 316.9 L693.8 320.2 L694.5 324.2 L695.2 328.7 L695.9 333.7 L696.5 339.0 L697.2 344.6 L697.9 350.3 L698.5 356.1 L699.2 361.9 L699.9 367.5 L700.5 372.8 L701.2 377.8 L701.9 382.3 L702.6 386.3 L703.2 389.6 L703.9 392.3 L704.6 394.2 L705.2 395.4 L705.9 395.8 L706.6 395.3 L707.3 393.9 L707.9 391.5 L708.6 388.3 L709.3 384.3 L710.0 379.6 L710.6 374.3 L711.3 368.5 L712.0 362.3 L712.7 356.0 L713.3 349.5 L714.0 343.2 L714.7 337.0 L715.4 331.2 L716.0 325.9 L716.7 321.2 L717.4 317.2 L718.1 314.0 L718.7 311.6 L719.4 310.2 L720.1 309.7 L720.8 310.2 L721.5 311.6 L722.2 314.0 L722.9 317.3 L723.6 321.4 L724.3 326.2 L725.0 331.6 L725.7 337.5 L726.4 343.8 L727.1 350.3 L727.7 356.8 L728.4 363.3 L729.1 369.6 L729.8 375.5 L730.5 380.9 L731.2 385.7 L731.9 389.8 L732.6 393.0 L733.3 395.4 L734.0 396.9 L734.7 397.4 L735.4 396.9 L736.1 395.6 L736.7 393.4 L737.4 390.4 L738.1 386.7 L738.8 382.3 L739.4 377.2 L740.1 371.8 L740.8 365.9 L741.5 359.8 L742.2 353.5 L742.8 347.3 L743.5 341.2 L744.2 335.3 L744.9 329.8 L745.5 324.8 L746.2 320.4 L746.9 316.7 L747.6 313.7 L748.2 311.5 L748.9 310.1 L749.6 309.7 L750.3 310.1 L751.0 311.5 L751.6 313.7 L752.3 316.7 L753.0 320.4 L753.7 324.8 L754.4 329.8 L755.1 335.3 L755.7 341.2 L756.4 347.3 L757.1 353.5 L757.8 359.8 L758.5 365.9 L759.1 371.8 L759.8 377.3 L760.5 382.3 L761.2 386.7 L761.9 390.4 L762.6 393.4 L763.2 395.6 L763.9 397.0 L764.6 397.4 L765.3 396.9 L766.0 395.5 L766.7 393.1 L767.3 389.8 L768.0 385.7 L768.7 380.9 L769.4 375.5 L770.1 369.6 L770.8 363.3 L771.5 356.8 L772.1 350.3 L772.8 343.8 L773.5 337.5 L774.2 331.6 L774.9 326.2 L775.6 321.4 L776.3 317.3 L776.9 314.0 L777.6 311.6 L778.3 310.2 L779.0 309.7 L779.7 310.1 L780.4 311.5 L781.1 313.7 L781.7 316.7 L782.4 320.4 L783.1 324.8 L783.8 329.8 L784.5 335.3 L785.2 341.2 L785.9 347.3 L786.5 353.5 L787.2 359.8 L787.9 365.9 L788.6 371.8 L789.3 377.3 L790.0 382.3 L790.7 386.7 L791.4 390.4 L792.0 393.4 L792.7 395.6 L793.4 397.0 L794.1 397.4 L794.8 396.9 L795.5 395.5 L796.2 393.1 L796.8 389.8 L797.5 385.7 L798.2 380.9 L798.9 375.5 L799.6 369.6 L800.3 363.3 L801.0 356.8 L801.6 350.3 L802.3 343.8 L803.0 337.5 L803.7 331.6 L804.4 326.2 L805.1 321.4 L805.8 317.3 L806.4 314.0 L807.1 311.6 L807.8 310.2 L808.5 309.7 L809.2 310.1 L809.9 311.5 L810.6 313.7 L811.3 316.7 L812.0 320.4 L812.7 324.8 L813.4 329.8 L814.1 335.3 L814.8 341.2 L815.5 347.3 L816.1 353.5 L816.8 359.8 L817.5 365.9 L818.2 371.8 L818.9 377.3 L819.6 382.3 L820.3 386.7 L821.0 390.4 L821.7 393.4 L822.4 395.6 L823.1 397.0 L823.8 397.4 L824.5 396.9 L825.2 395.5 L825.9 393.1 L826.6 389.8 L827.3 385.7 L828.0 380.9 L828.7 375.5 L829.4 369.6 L830.1 363.3 L830.8 356.8 L831.4 350.3 L832.1 343.8 L832.8 337.5 L833.5 331.6 L834.2 326.2 L834.9 321.4 L835.6 317.3 L836.3 314.0 L837.0 311.6 L837.7 310.2 L838.4 309.7 L839.1 310.1 L839.8 311.5 L840.4 313.7 L841.1 316.7 L841.8 320.4 L842.5 324.8 L843.1 329.8 L843.8 335.3 L844.5 341.2 L845.2 347.3 L845.8 353.6 L846.5 359.8 L847.2 365.9 L847.9 371.8 L848.6 377.3 L849.2 382.3 L849.9 386.7 L850.6 390.5 L851.3 393.5 L851.9 395.6 L852.6 397.0 L853.3 397.4 L854.0 396.9 L854.7 395.5 L855.4 393.1 L856.1 389.8 L856.8 385.7 L857.5 380.9 L858.2 375.5 L858.9 369.6 L859.6 363.3 L860.3 356.8 L860.9 350.3 L861.6 343.8 L862.3 337.5 L863.0 331.6 L863.7 326.2 L864.4 321.4 L865.1 317.3 L865.8 314.0 L866.5 311.6 L867.2 310.2 L867.9 309.7 L868.6 310.2 L869.3 311.5 L869.9 313.7 L870.6 316.8 L871.3 320.6 L872.0 325.1 L872.7 330.2 L873.4 335.8 L874.0 341.8 L874.7 348.0 L875.4 354.3 L876.1 360.7 L876.8 366.9 L877.4 372.9 L878.1 378.5 L878.8 383.6 L879.5 388.1 L880.2 391.9 L880.9 395.0 L881.5 397.2 L882.2 398.5 L882.9 399.0 L883.6 398.6 L884.3 397.2 L885.0 395.1 L885.6 392.1 L886.3 388.4 L887.0 384.0 L887.7 379.1 L888.4 373.7 L889.1 367.9 L889.8 361.8 L890.5 355.6 L891.1 349.5 L891.8 343.4 L892.5 337.6 L893.2 332.2 L893.9 327.3 L894.6 322.9 L895.3 319.2 L895.9 316.2 L896.6 314.1 L897.3 312.7 L898.0 312.3 L898.7 312.7 L899.3 314.1 L900.0 316.2 L900.7 319.2 L901.3 322.9 L902.0 327.3 L902.7 332.2 L903.3 337.6 L904.0 343.4 L904.7 349.5 L905.4 355.6 L906.0 361.8 L906.7 367.9 L907.4 373.7 L908.0 379.1 L908.7 384.0 L909.4 388.4 L910.0 392.1 L910.7 395.1 L911.4 397.2 L912.0 398.6 L912.7 399.0 L913.4 398.5 L914.1 397.2 L914.7 395.0 L915.4 392.0 L916.1 388.2 L916.8 383.7 L917.4 378.6 L918.1 373.0 L918.8 367.1 L919.5 360.9 L920.2 354.6 L920.8 348.3 L921.5 342.1 L922.2 336.2 L922.9 330.6 L923.5 325.5 L924.2 321.0 L924.9 317.2 L925.6 314.2 L926.2 312.0 L926.9 310.7 L927.6 310.2 L928.3 310.7 L929.0 312.0 L929.6 314.2 L930.3 317.2 L931.0 321.0 L931.7 325.5 L932.4 330.6 L933.1 336.2 L933.7 342.1 L934.4 348.3 L935.1 354.6 L935.8 360.9 L936.5 367.1 L937.1 373.0 L937.8 378.6 L938.5 383.7 L939.2 388.2 L939.9 392.0 L940.6 395.0 L941.2 397.2 L941.9 398.5 L942.6 399.0 L943.3 398.5 L944.0 397.0 L944.7 394.6 L945.4 391.3 L946.1 387.1 L946.8 382.3 L947.5 376.8 L948.2 370.8 L948.9 364.5 L949.6 357.9 L950.2 351.3 L950.9 344.7 L951.6 338.4 L952.3 332.4 L953.0 326.9 L953.7 322.1 L954.4 317.9 L955.1 314.6 L955.8 312.2 L956.5 310.7 L957.2 310.2 L957.9 310.7 L958.6 312.0 L959.3 314.2 L960.0 317.2 L960.7 321.0 L961.3 325.5 L962.0 330.6 L962.7 336.2 L963.4 342.1 L964.1 348.3 L964.8 354.6 L965.5 360.9 L966.2 367.1 L966.9 373.0 L967.6 378.6 L968.3 383.7 L968.9 388.2 L969.6 392.0 L970.3 395.0 L971.0 397.2 L971.7 398.5 L972.4 399.0 L973.1 398.5 L973.8 397.0 L974.5 394.6 L975.2 391.3 L975.9 387.1 L976.6 382.3 L977.3 376.8 L978.0 370.8 L978.7 364.5 L979.4 357.9 L980.0 351.3 L980.7 344.7 L981.4 338.4 L982.1 332.4 L982.8 326.9 L983.5 322.1 L984.2 317.9 L984.9 314.6 L985.6 312.2 L986.3 310.7 L987.0 310.2 L987.7 310.7 L988.4 312.0 L989.1 314.2 L989.8 317.2 L990.5 321.0 L991.2 325.5 L991.9 330.6 L992.6 336.2 L993.3 342.1 L994.0 348.3 L994.6 354.6 L995.3 360.9 L996.0 367.1 L996.7 373.0 L997.4 378.6 L998.1 383.7 L998.8 388.2 L999.5 392.0 L1000.2 395.0 L1000.9 397.2 L1001.6 398.5 L1002.3 399.0 L1003.0 398.5 L1003.6 397.2 L1004.3 394.9 L1005.0 391.8 L1005.6 388.0 L1006.3 383.4 L1007.0 378.2 L1007.6 372.6 L1008.3 366.5 L1009.0 360.2 L1009.6 353.8 L1010.3 347.4 L1011.0 341.1 L1011.7 335.0 L1012.3 329.4 L1013.0 324.2 L1013.7 319.6 L1014.3 315.8 L1015.0 312.7 L1015.7 310.4 L1016.3 309.1 L1017.0 308.6 L1017.7 309.1 L1018.4 310.4 L1019.1 312.7 L1019.8 315.8 L1020.5 319.6 L1021.1 324.2 L1021.8 329.4 L1022.5 335.0 L1023.2 341.1 L1023.9 347.4 L1024.6 353.8 L1025.3 360.2 L1026.0 366.5 L1026.7 372.6 L1027.4 378.2 L1028.1 383.4 L1028.7 388.0 L1029.4 391.8 L1030.1 394.9 L1030.8 397.2 L1031.5 398.5 L1032.2 399.0 L1032.9 398.5 L1033.6 397.0 L1034.3 394.6 L1035.0 391.2 L1035.7 387.1 L1036.4 382.2 L1037.1 376.6 L1037.8 370.6 L1038.5 364.2 L1039.2 357.6 L1039.8 350.9 L1040.5 344.3 L1041.2 337.9 L1041.9 331.9 L1042.6 326.3 L1043.3 321.4 L1044.0 317.3 L1044.7 313.9 L1045.4 311.5 L1046.1 310.0 L1046.8 309.5 L1047.5 309.9 L1048.2 311.3 L1048.8 313.5 L1049.5 316.6 L1050.2 320.4 L1050.9 324.9 L1051.5 330.1 L1052.2 335.7 L1052.9 341.6 L1053.6 347.9 L1054.2 354.2 L1054.9 360.6 L1055.6 366.9 L1056.3 372.8 L1057.0 378.4 L1057.6 383.6 L1058.3 388.1 L1059.0 391.9 L1059.7 395.0 L1060.3 397.2 L1061.0 398.5 L1061.7 399.0 L1062.4 398.5 L1063.0 397.2 L1063.7 395.0 L1064.4 391.9 L1065.1 388.1 L1065.7 383.7 L1066.4 378.6 L1067.1 373.0 L1067.8 367.1 L1068.4 360.9 L1069.1 354.6 L1069.8 348.2 L1070.4 342.0 L1071.1 336.1 L1071.8 330.5 L1072.5 325.4 L1073.1 321.0 L1073.8 317.2 L1074.5 314.1 L1075.2 311.9 L1075.8 310.6 L1076.5 310.1 L1077.2 310.6 L1077.9 311.9 L1078.5 314.1 L1079.2 317.2 L1079.9 321.0 L1080.6 325.4 L1081.2 330.5 L1081.9 336.1 L1082.6 342.0 L1083.3 348.2 L1084.0 354.6 L1084.6 360.9 L1085.3 367.1 L1086.0 373.0 L1086.7 378.6 L1087.3 383.7 L1088.0 388.1 L1088.7 391.9 L1089.4 395.0 L1090.0 397.2 L1090.7 398.5 L1091.4 399.0 L1092.1 398.5 L1092.8 397.0 L1093.5 394.6 L1094.2 391.3 L1094.9 387.2 L1095.6 382.4 L1096.3 376.9 L1097.0 371.0 L1097.7 364.7 L1098.4 358.1 L1099.0 351.6 L1099.7 345.0 L1100.4 338.7 L1101.1 332.8 L1101.8 327.3 L1102.5 322.5 L1103.2 318.4 L1103.9 315.1 L1104.6 312.7 L1105.3 311.2 L1106.0 310.7 L1106.7 311.1 L1107.4 312.5 L1108.0 314.7 L1108.7 317.7 L1109.4 321.5 L1110.1 325.9 L1110.8 331.0 L1111.5 336.5 L1112.1 342.4 L1112.8 348.6 L1113.5 354.8 L1114.2 361.1 L1114.9 367.3 L1115.5 373.2 L1116.2 378.7 L1116.9 383.8 L1117.6 388.2 L1118.3 392.0 L1119.0 395.0 L1119.6 397.2 L1120.3 398.6 L1121.0 399.0 L1121.7 398.5 L1122.4 397.0 L1123.1 394.6" stroke="#00c400" stroke-width="1.25" fill="none" stroke-linejoin="round"/>
<path d="M67.5 452.9 L68.4 454.5 L69.3 453.1 L70.2 453.1 L71.1 453.1 L72.0 454.7 L72.9 454.0 L73.8 453.1 L74.7 453.4 L75.6 453.8 L76.5 454.0 L77.4 452.3 L78.3 454.0 L79.2 453.2 L80.1 452.9 L81.0 453.1 L81.9 454.0 L82.8 454.6 L83.7 453.5 L84.6 453.8 L85.5 452.8 L86.4 453.7 L87.3 454.0 L88.2 452.4 L89.1 453.0 L90.0 454.0 L90.9 452.2 L91.8 453.1 L92.7 453.8 L93.6 452.2 L94.5 453.1 L95.4 453.4 L96.3 454.0 L97.2 452.5 L98.1 454.2 L99.0 453.6 L99.9 454.2 L100.8 454.2 L101.7 453.6 L102.6 453.7 L103.5 452.2 L104.4 452.5 L105.3 452.7 L106.2 453.2 L107.1 454.1 L108.0 452.2 L108.9 453.2 L109.8 452.5 L110.7 452.3 L111.6 454.4 L112.5 453.5 L113.4 454.5 L114.3 454.2 L115.2 452.8 L116.1 452.1 L117.0 454.8 L117.9 453.1 L118.8 452.6 L119.7 453.9 L120.6 453.5 L121.5 452.9 L122.4 453.2 L123.3 453.5 L124.2 453.5 L125.1 453.9 L126.0 453.2 L126.9 453.2 L127.8 453.8 L128.7 453.6 L129.6 454.2 L130.5 453.2 L131.4 453.3 L132.3 452.6 L133.2 454.4 L134.1 452.4 L135.0 453.5 L135.9 452.8 L136.8 453.6 L137.7 453.9 L138.6 452.3 L139.5 453.3 L140.4 452.2 L141.3 454.4 L142.2 453.1 L143.1 452.3 L144.0 452.9 L144.9 454.3 L145.8 454.4 L146.7 454.3 L147.6 452.9 L148.5 453.3 L149.4 454.5 L150.3 452.9 L151.2 453.2 L152.1 452.7 L153.0 452.6 L153.9 454.2 L154.8 453.8 L155.7 453.7 L156.6 453.8 L157.5 454.1 L158.4 454.5 L159.3 453.4 L160.2 453.2 L161.1 452.7 L162.0 454.2 L162.9 453.0 L163.8 452.4 L164.7 453.2 L165.6 453.4 L166.5 454.0 L167.4 454.1 L168.3 452.9 L169.2 452.8 L170.1 453.2 L171.0 452.6 L171.9 453.3 L172.8 453.7 L173.7 453.4 L174.6 452.3 L175.5 452.6 L176.4 454.3 L177.3 452.7 L178.2 453.9 L179.1 453.8 L180.0 453.2 L180.9 452.7 L181.8 453.5 L182.7 452.8 L183.6 453.3 L184.5 453.5 L185.4 452.9 L186.3 453.2 L187.2 453.2 L188.1 452.5 L189.0 453.3 L189.9 453.0 L190.8 452.1 L191.7 453.2 L192.6 453.2 L193.5 453.0 L194.4 452.0 L195.3 453.9 L196.2 453.9 L197.1 453.9 L198.0 453.6 L198.9 452.5 L199.8 453.5 L200.7 452.8 L201.6 454.9 L202.5 453.0 L203.4 453.9 L204.3 452.3 L205.2 452.6 L206.1 453.0 L207.0 453.9 L207.9 453.8 L208.8 453.6 L209.7 452.1 L210.6 454.2 L211.5 452.8 L212.4 454.5 L213.3 454.7 L214.2 454.0 L215.1 454.1 L216.0 452.5 L216.9 455.2 L217.8 453.6 L218.7 454.1 L219.6 452.8 L220.5 453.4 L221.4 452.6 L222.3 453.2 L223.2 453.4 L224.1 453.6 L225.0 454.4 L225.9 453.7 L226.8 453.6 L227.7 453.4 L228.6 454.8 L229.5 453.0 L230.4 454.2 L231.3 452.0 L232.2 452.8 L233.1 453.7 L234.0 453.3 L234.9 455.5 L235.8 455.2 L236.7 452.3 L237.6 452.7 L238.5 453.3 L239.4 454.6 L240.3 454.2 L241.2 453.6 L242.1 452.4 L243.0 452.8 L243.9 451.5 L244.8 452.3 L245.7 453.7 L246.6 454.0 L247.5 452.5 L248.4 453.5 L249.3 454.5 L250.2 453.5 L251.1 453.2 L252.0 453.8 L252.9 453.8 L253.8 453.5 L254.7 453.0 L255.6 453.1 L256.5 453.5 L257.4 453.0 L258.3 454.3 L259.2 454.0 L260.1 454.2 L261.0 454.8 L261.9 454.5 L262.8 454.4 L263.7 453.7 L264.6 453.3 L265.5 455.0 L266.4 452.9 L267.3 453.0 L268.2 452.8 L269.1 453.6 L270.0 453.7 L270.9 454.1 L271.8 453.2 L272.7 452.2 L273.6 453.6 L274.5 454.1 L275.4 453.4 L276.3 453.3 L277.2 453.8 L278.1 454.4 L279.0 453.4 L279.9 452.4 L280.8 453.0 L281.7 453.3 L282.6 452.1 L283.5 453.9 L284.4 452.9 L285.3 453.8 L286.2 453.5 L287.1 453.2 L288.0 454.5 L288.9 453.0 L289.8 452.9 L290.7 453.6 L291.6 454.0 L292.5 453.4 L293.4 452.7 L294.3 453.9 L295.2 453.8 L296.1 454.9 L297.0 453.2 L297.9 453.6 L298.8 453.0 L299.7 452.4 L300.6 453.5 L301.5 454.0 L302.4 452.7 L303.3 452.9 L304.2 452.6 L305.1 454.3 L306.0 453.0 L306.9 453.8 L307.8 452.8 L308.7 453.5 L309.6 453.0 L310.5 451.8 L311.4 453.5 L312.3 453.8 L313.2 451.9 L314.1 453.3 L315.0 453.1 L315.9 452.6 L316.8 453.2 L317.7 452.0 L318.6 453.6 L319.5 454.2 L320.4 452.5 L321.3 453.4 L322.2 454.4 L323.1 453.5 L324.0 453.0 L324.9 452.8 L325.8 453.5 L326.7 453.3 L327.6 453.8 L328.5 452.3 L329.4 454.2 L330.3 453.1 L331.2 453.8 L332.1 452.9 L333.0 452.5 L333.9 453.0 L334.8 452.7 L335.7 453.1 L336.6 453.9 L337.5 454.2 L338.4 453.5 L339.3 453.0 L340.2 453.1 L341.1 453.8 L342.0 454.2 L342.9 453.2 L343.8 453.3 L344.7 452.9 L345.6 453.5 L346.5 454.1 L347.4 451.4 L348.3 453.6 L349.2 453.0 L350.1 451.8 L351.0 453.6 L351.9 453.3 L352.8 453.7 L353.7 452.4 L354.6 454.9 L355.5 453.5 L356.4 453.2 L357.3 454.5 L358.2 453.9 L359.1 454.0 L360.0 454.2 L360.9 451.9 L361.8 454.6 L362.7 453.2 L363.6 453.6 L364.5 454.0 L365.4 452.9 L366.3 453.6 L367.2 453.9 L368.1 453.4 L369.0 453.7 L369.9 452.3 L370.8 452.6 L371.7 452.6 L372.6 453.7 L373.5 456.0 L374.4 453.6 L375.3 453.3 L376.2 453.4 L377.1 454.1 L378.0 453.9 L378.9 452.6 L379.8 454.1 L380.7 453.4 L381.6 454.0 L382.5 452.0 L383.4 452.3 L384.3 453.8 L385.2 452.1 L386.1 453.7 L387.0 453.6 L387.9 453.5 L388.8 453.6 L389.7 453.6 L390.6 453.7 L391.5 453.1 L392.4 453.4 L393.3 455.5 L394.2 454.2 L395.1 453.8 L396.0 453.7 L396.9 452.9 L397.8 453.6 L398.7 453.2 L399.6 454.1 L400.5 452.8 L401.4 451.7 L402.3 453.0 L403.2 453.9 L404.1 455.1 L405.0 454.1 L405.9 452.7 L406.8 453.2 L407.7 452.7 L408.6 453.3 L409.5 452.8 L410.4 452.2 L411.3 453.7 L412.2 453.5 L413.1 453.3 L414.0 453.6 L414.9 454.8 L415.8 453.5 L416.7 453.1 L417.6 454.0 L418.5 452.3 L419.4 453.9 L420.3 452.9 L421.2 452.8 L422.1 453.5 L423.0 454.6 L423.9 452.9 L424.8 454.1 L425.7 453.7 L426.6 452.4 L427.5 454.0 L428.4 452.8 L429.3 452.4 L430.2 452.8 L431.1 452.9 L432.0 453.8 L432.9 452.9 L433.8 454.4 L434.7 453.6 L435.6 452.9 L436.5 452.8 L437.4 453.6 L438.3 452.0 L439.2 451.9 L440.1 452.8 L441.0 453.8 L441.9 453.5 L442.8 453.4 L443.7 453.3 L444.6 451.9 L445.5 453.2 L446.4 452.2 L447.3 454.0 L448.2 453.4 L449.1 453.3 L450.0 453.7 L450.9 453.6 L451.8 453.6 L452.7 453.6 L453.6 453.0 L454.5 452.5 L455.4 453.6 L456.3 454.4 L457.2 454.1 L458.1 453.3 L459.0 453.8 L459.9 453.1 L460.8 453.7 L461.7 453.0 L462.6 453.5 L463.5 454.8 L464.4 453.9 L465.3 454.4 L466.2 452.9 L467.1 452.9 L468.0 453.4 L468.9 453.8 L469.8 453.3 L470.7 454.1 L471.6 453.0 L472.5 454.4 L473.4 454.1 L474.3 452.6 L475.2 453.8 L476.1 453.2 L477.0 454.1 L477.9 453.0 L478.8 453.6 L479.7 453.8 L480.6 451.5 L481.5 452.1 L482.4 453.5 L483.3 453.3 L484.2 454.1 L485.1 453.6 L486.0 452.5 L486.9 453.6 L487.8 452.9 L488.7 453.2 L489.6 453.0 L490.5 453.6 L491.4 452.4 L492.3 452.6 L493.2 451.8 L494.1 454.9 L495.0 452.7 L495.9 452.8 L496.8 452.6 L497.7 452.9 L498.6 453.1 L499.5 453.8 L500.4 453.5 L501.3 453.6 L502.2 453.0 L503.1 453.3 L504.0 454.3 L504.9 453.4 L505.8 453.6 L506.7 452.0 L507.6 453.8 L508.5 453.6 L509.4 454.3 L510.3 451.5 L511.2 453.4 L512.1 453.3 L513.0 453.5 L513.9 453.0 L514.8 453.5 L515.7 453.9 L516.6 453.4 L517.5 453.2 L518.4 453.2 L519.3 453.1 L520.2 453.4 L521.1 452.9 L522.0 452.0 L522.9 454.3 L523.8 452.2 L524.7 453.3 L525.6 452.5 L526.5 453.2 L527.4 452.7 L528.3 453.4 L529.2 452.8 L530.1 452.5 L531.0 453.6 L531.9 454.3 L532.8 453.6 L533.7 453.5 L534.6 452.6 L535.5 453.3 L536.4 453.7 L537.3 452.9 L538.2 454.0 L539.1 453.3 L540.0 453.6 L540.9 453.0 L541.8 453.0 L542.7 453.5 L543.6 453.6 L544.5 453.6 L545.4 452.7 L546.3 452.9 L547.2 453.4 L548.1 452.1 L549.0 454.1 L549.9 453.6 L550.8 453.4 L551.7 452.9 L552.6 453.9 L553.5 453.2 L554.4 454.7 L555.3 453.6 L556.2 452.3 L557.1 453.9 L558.0 453.0 L558.9 453.0 L559.8 453.2 L560.7 453.3 L561.6 453.5 L562.5 453.9 L563.4 453.7 L564.3 452.9 L565.2 452.4 L566.1 452.8 L567.0 453.6 L567.9 454.0 L568.8 454.6 L569.7 452.4 L570.6 453.4 L571.5 453.2 L572.4 453.1 L573.3 453.5 L574.2 453.2 L575.1 453.2 L576.0 452.9 L576.9 453.6 L577.8 454.1 L578.7 454.5 L579.6 453.0 L580.5 452.6 L581.4 453.2 L582.3 452.8 L583.2 454.1 L584.1 452.8 L585.0 453.4 L585.9 452.4 L586.8 453.1 L587.7 453.5 L588.6 454.4 L589.5 452.9 L590.4 453.6 L591.3 451.9 L592.2 452.5 L593.1 452.8 L594.0 453.0 L594.9 453.7 L595.8 453.8 L596.7 452.2 L597.6 453.7 L598.5 452.6 L599.4 454.6 L600.3 453.6 L601.2 453.5 L602.1 453.2 L603.0 453.3 L603.9 453.4 L604.8 452.9 L605.7 453.9 L606.6 453.5 L607.5 453.9 L608.4 453.3 L609.3 453.8 L610.2 452.8 L611.1 455.9 L612.0 452.9 L612.9 453.0 L613.8 454.0 L614.7 454.2 L615.6 452.8 L616.5 452.2 L617.4 452.4 L618.3 452.7 L619.2 452.8 L620.1 453.2 L621.0 454.1 L621.9 454.1 L622.8 452.9 L623.7 453.7 L624.6 454.0 L625.5 454.3 L626.4 453.2 L627.3 452.8 L628.2 453.9 L629.1 454.4 L630.0 453.0 L630.9 454.7 L631.8 454.6 L632.7 453.2 L633.6 452.3 L634.5 452.9 L635.4 453.1 L636.3 453.7 L637.2 452.2 L638.1 455.1 L639.0 455.0 L639.9 452.8 L640.8 452.0 L641.7 453.2 L642.6 453.6 L643.5 454.3 L644.4 453.9 L645.3 453.2 L646.2 452.0 L647.1 453.7 L648.0 453.9 L648.9 453.1 L649.8 453.5 L650.7 453.5 L651.6 453.2 L652.5 452.5 L653.4 453.6 L654.3 452.4 L655.2 454.3 L656.1 452.7 L657.0 453.7 L657.9 452.8 L658.8 453.6 L659.7 453.2 L660.6 453.7 L661.5 452.8 L662.4 452.2 L663.3 453.2 L664.2 453.1 L665.1 452.3 L666.0 452.9 L666.9 452.2 L667.8 453.4 L668.7 453.1 L669.6 453.4 L670.5 455.2 L671.4 453.5 L672.3 453.6 L673.2 453.8 L674.1 453.3 L675.0 452.9 L675.9 454.0 L676.8 454.1 L677.7 451.3 L678.6 453.2 L679.5 453.1 L680.4 453.0 L681.3 454.2 L682.2 453.0 L683.1 454.0 L684.0 453.0 L684.9 453.1 L685.8 453.9 L686.7 452.8 L687.6 453.2 L688.5 452.6 L689.4 452.7 L690.3 453.9 L691.2 453.8 L692.1 452.5 L693.0 452.5 L693.9 455.1 L694.8 452.9 L695.7 452.7 L696.6 453.7 L697.5 452.8 L698.4 453.1 L699.3 454.0 L700.2 454.0 L701.1 453.2 L702.0 454.3 L702.9 453.2 L703.8 453.2 L704.7 453.3 L705.6 453.1 L706.5 453.7 L707.4 453.5 L708.3 452.8 L709.2 453.5 L710.1 453.0 L711.0 452.9 L711.9 453.2 L712.8 454.1 L713.7 453.5 L714.6 454.2 L715.5 454.4 L716.4 453.3 L717.3 452.9 L718.2 452.8 L719.1 453.5 L720.0 453.9 L720.9 454.5 L721.8 452.4 L722.7 454.0 L723.6 454.1 L724.5 455.1 L725.4 453.5 L726.3 453.3 L727.2 452.3 L728.1 452.8 L729.0 452.6 L729.9 452.6 L730.8 452.7 L731.7 452.3 L732.6 453.3 L733.5 453.6 L734.4 453.9 L735.3 453.3 L736.2 454.1 L737.1 454.1 L738.0 452.3 L738.9 453.2 L739.8 452.5 L740.7 452.7 L741.6 453.5 L742.5 453.3 L743.4 454.4 L744.3 454.8 L745.2 453.6 L746.1 453.2 L747.0 453.3 L747.9 453.3 L748.8 453.8 L749.7 452.8 L750.6 453.8 L751.5 453.2 L752.4 454.1 L753.3 454.3 L754.2 454.6 L755.1 453.2 L756.0 452.4 L756.9 452.2 L757.8 453.2 L758.7 452.4 L759.6 452.2 L760.5 453.1 L761.4 452.7 L762.3 453.8 L763.2 454.7 L764.1 453.2 L765.0 453.6 L765.9 452.3 L766.8 453.5 L767.7 452.9 L768.6 452.6 L769.5 452.1 L770.4 454.5 L771.3 452.2 L772.2 452.5 L773.1 453.4 L774.0 453.6 L774.9 453.6 L775.8 453.4 L776.7 452.7 L777.6 453.9 L778.5 453.5 L779.4 452.4 L780.3 454.5 L781.2 453.1 L782.1 454.0 L783.0 452.4 L783.9 452.5 L784.8 453.0 L785.7 452.9 L786.6 454.1 L787.5 452.2 L788.4 453.5 L789.3 452.7 L790.2 453.7 L791.1 453.5 L792.0 453.0 L792.9 454.9 L793.8 453.3 L794.7 454.1 L795.6 452.4 L796.5 453.3 L797.4 453.4 L798.3 453.5 L799.2 453.1 L800.1 452.8 L801.0 451.2 L801.9 453.0 L802.8 452.7 L803.7 453.2 L804.6 454.0 L805.5 454.9 L806.4 453.8 L807.3 454.1 L808.2 453.8 L809.1 453.9 L809.6 453.3 L810.3 459.4 L811.2 458.9 L812.3 459.0 L813.4 459.2 L814.5 459.3 L815.6 460.2 L816.7 460.0 L817.8 460.3 L818.9 460.2 L820.0 460.2 L821.1 459.7 L822.2 460.8 L823.3 460.8 L824.4 460.8 L825.5 461.1 L826.6 460.4 L827.7 460.5 L828.8 460.5 L829.9 460.2 L831.0 460.3 L832.1 460.4 L833.2 460.3 L834.3 459.5 L835.4 460.3 L836.5 459.1 L837.6 459.3 L838.7 459.5 L839.8 460.1 L840.9 459.0 L842.0 459.9 L843.1 459.4 L844.2 459.5 L845.3 458.7 L846.4 459.7 L847.5 459.1 L848.6 458.1 L849.7 459.1 L850.8 458.5 L851.9 459.0 L853.0 458.7 L854.1 459.0 L855.2 458.8 L856.3 458.3 L857.4 458.4 L858.5 457.1 L859.5 457.7 M860.3 440.2 L861.2 442.4 L862.1 444.1 L863.0 445.8 L863.9 445.8 L864.8 445.8 L865.7 446.2 L866.6 446.2 L867.5 446.3 L868.4 446.4 L869.3 445.1 L870.2 443.8 L871.1 443.0 L872.0 442.5 L872.9 441.9 L873.8 441.6 L874.7 440.5 L875.6 440.7 L876.5 440.7 L877.4 440.0 L878.3 439.3 L879.2 438.4 L880.1 438.1 L881.0 436.4 L881.9 436.1 L882.8 435.9 L883.7 439.2 L884.6 438.7 L885.5 439.1 L886.4 441.5 L887.3 444.1 L888.2 442.7 L889.1 441.6 L890.0 439.9 L890.9 439.2 L891.8 436.9 L892.7 436.3 L893.5 434.5 L893.8 420.0 L894.5 430.5 L895.2 424.0 L896.0 420.2 L897.0 421.1 L897.9 420.0 L898.8 421.7 L899.7 422.1 L900.6 423.2 L901.5 423.2 L902.4 422.0 L903.3 424.4 L904.2 424.4 L905.1 424.5 L906.0 424.5 L906.9 423.8 L907.8 424.9 L908.7 424.4 L909.6 427.0 L910.5 424.9 L911.4 424.4 L912.3 425.2 L913.2 426.7 L914.1 425.3 L915.0 424.1 L915.9 427.3 L916.8 426.7 L917.7 426.4 L918.6 427.6 L919.5 426.6 L920.4 426.7 L921.3 428.6 L922.2 427.8 L923.1 428.9 L924.0 428.8 L924.9 429.7 L925.8 429.4 L926.7 428.1 L927.6 430.4 L928.5 429.8 L929.4 430.9 L930.3 430.5 L931.2 431.6 L932.1 430.5 L933.0 429.3 L933.9 430.8 L934.8 431.5 L935.7 431.0 L936.6 431.1 L937.5 432.7 L938.4 431.6 L939.3 432.7 L940.2 432.2 L941.1 431.1 L942.0 431.6 L942.9 432.3 L943.8 432.9 L944.7 432.2 L945.6 431.9 L946.5 432.3 L947.4 432.8 L948.3 432.7 L949.2 433.1 L950.1 435.0 L951.0 434.0 L951.9 433.3 L952.8 434.0 L953.7 435.3 L954.6 434.8 L955.5 434.3 L956.4 433.5 L957.3 433.4 L958.2 434.6 L959.1 434.9 L960.0 433.9 L960.9 434.2 L961.8 435.3 L962.7 433.8 L963.6 434.3 L964.5 435.7 L965.4 436.3 L966.3 436.2 L967.2 436.9 L968.1 437.4 L969.0 437.1 L969.9 436.3 L970.8 438.1 L971.7 437.8 L972.6 437.4 L973.5 436.1 L974.4 437.1 L975.3 435.3 L976.2 436.6 L977.1 435.1 L978.0 436.7 L978.9 437.8 L979.8 437.1 L980.7 438.4 L981.6 437.2 L982.5 437.4 L983.4 437.1 L984.3 437.8 L985.2 437.5 L986.1 438.4 L987.0 438.8 L987.9 437.9 L988.8 436.9 L989.7 438.2 L990.6 438.9 L991.5 438.4 L992.4 438.1 L993.3 438.7 L994.2 439.0 L995.1 436.1 L996.0 439.2 L996.9 438.7 L997.8 438.5 L998.7 437.7 L999.6 438.4 L1000.5 438.7 L1001.4 437.2 L1002.3 438.9 L1003.2 438.4 L1004.1 439.5 L1005.0 438.9 L1005.9 438.3 L1006.8 438.5 L1007.7 439.0 L1008.6 438.7 L1009.5 439.0 L1010.4 438.1 L1011.3 437.7 L1012.2 438.3 L1013.1 437.6 L1014.0 438.2 L1014.9 439.1 L1015.8 437.6 L1016.7 437.9 L1017.6 439.4 L1018.5 438.5 L1019.4 438.9 L1020.3 438.0 L1021.2 438.2 L1022.1 438.8 L1023.0 440.3 L1023.9 439.4 L1024.8 437.9 L1025.7 439.5 L1026.6 439.9 L1027.5 439.7 L1028.4 438.3 L1029.3 439.2 L1030.2 440.9 L1031.1 438.6 L1032.0 439.6 L1032.9 438.8 L1033.8 438.5 L1034.7 439.1 L1035.6 440.3 L1036.5 440.4 L1037.4 438.9 L1038.3 439.2 L1039.2 438.9 L1040.1 438.1 L1041.0 440.1 L1041.9 440.9 L1042.8 440.9 L1043.7 439.4 L1044.6 440.8 L1045.5 440.6 L1046.4 439.6 L1047.3 439.9 L1048.2 439.6 L1049.1 440.1 L1050.0 441.4 L1050.9 439.3 L1051.8 439.2 L1052.7 440.8 L1053.6 440.2 L1054.5 438.8 L1055.4 439.5 L1056.3 439.7 L1057.2 439.9 L1058.1 440.6 L1059.0 441.1 L1059.9 440.3 L1060.8 440.6 L1061.7 440.0 L1062.6 441.3 L1063.5 441.6 L1064.4 440.5 L1065.3 440.1 L1066.2 442.3 L1067.1 441.5 L1068.0 440.1 L1068.9 439.6 L1069.8 440.7 L1070.7 441.8 L1071.6 440.6 L1072.5 440.8 L1073.4 440.7 L1074.3 441.6 L1075.2 442.2 L1076.1 440.2 L1077.0 440.9 L1077.9 441.0 L1078.8 440.7 L1079.7 440.3 L1080.6 441.8 L1081.5 441.3 L1082.4 441.7 L1083.3 442.3 L1084.2 440.9 L1085.1 441.6 L1086.0 440.9 L1086.9 441.1 L1087.8 441.4 L1088.7 441.0 L1089.6 440.0 L1090.5 442.3 L1091.4 441.3 L1092.3 440.3 L1093.2 439.5 L1094.1 441.1 L1095.0 441.7 L1095.9 441.9 L1096.8 442.0 L1097.7 440.9 L1098.6 441.7 L1099.5 440.0 L1100.4 441.3 L1101.3 441.9 L1102.2 440.7 L1103.1 441.0 L1104.0 441.2 L1104.9 441.2 L1105.8 442.2 L1106.7 440.2 L1107.6 442.0 L1108.5 440.0 L1109.4 440.4 L1110.3 440.3 L1111.2 440.8 L1112.1 440.5 L1113.0 441.2 L1113.9 440.8 L1114.8 442.4 L1115.7 441.0 L1116.6 440.5 L1117.5 440.9 L1118.4 441.1 L1119.3 440.5 L1120.2 439.7 L1121.1 439.9 L1122.0 440.7 L1122.9 441.1 L1123.5 440.4" stroke="#00e4ec" stroke-width="1.8" fill="none" stroke-linejoin="round"/>
<path d="M860 458.5V218M893.9 434V404.4" stroke="#00a4b8" stroke-width="1.1" fill="none"/>
<path d="M67.5 358.3 L69.0 357.5 L70.5 357.4 L72.0 357.7 L73.5 358.1 L75.0 357.9 L76.5 357.9 L78.0 357.6 L79.5 357.9 L81.0 357.7 L82.5 358.3 L84.0 357.8 L85.5 357.7 L87.0 357.2 L88.5 358.1 L90.0 357.6 L91.5 357.1 L93.0 357.9 L94.5 357.3 L96.0 358.2 L97.5 358.0 L99.0 357.6 L100.5 357.1 L102.0 357.1 L103.5 357.8 L105.0 357.5 L106.5 357.7 L108.0 357.8 L109.5 357.2 L111.0 357.9 L112.5 357.7 L114.0 358.1 L115.5 357.6 L117.0 357.0 L118.5 357.6 L120.0 357.4 L121.5 357.6 L123.0 357.3 L124.5 357.7 L126.0 358.2 L127.5 357.8 L129.0 358.0 L130.5 357.6 L132.0 357.1 L133.5 357.8 L135.0 357.4 L136.5 357.6 L138.0 358.2 L139.5 356.3 L141.0 357.9 L142.5 357.6 L144.0 358.1 L145.5 357.8 L147.0 358.2 L148.5 355.3 L150.0 358.1 L151.5 357.7 L153.0 357.5 L154.5 357.4 L156.0 357.5 L157.5 357.6 L159.0 357.2 L160.5 357.9 L162.0 357.3 L163.5 358.0 L165.0 358.7 L166.5 357.8 L168.0 358.0 L169.5 357.5 L171.0 357.6 L172.5 357.4 L174.0 357.7 L175.5 357.8 L177.0 357.6 L178.5 358.1 L180.0 356.9 L181.5 357.5 L183.0 357.3 L184.5 357.8 L186.0 358.4 L187.5 358.4 L189.0 357.7 L190.5 357.9 L192.0 357.7 L193.5 358.2 L195.0 357.7 L196.5 358.5 L198.0 358.5 L199.5 358.1 L201.0 356.0 L202.5 358.4 L204.0 357.2 L205.5 357.9 L207.0 358.1 L208.5 357.3 L210.0 357.4 L211.5 357.7 L213.0 358.0 L214.5 358.0 L216.0 357.9 L217.5 357.5 L219.0 357.8 L220.5 357.7 L222.0 357.0 L223.5 357.6 L225.0 358.1 L226.5 357.8 L228.0 357.4 L229.5 357.0 L231.0 358.4 L232.5 357.0 L234.0 357.9 L235.5 358.0 L237.0 357.8 L238.5 357.2 L240.0 357.2 L241.5 357.8 L243.0 358.0 L244.5 357.3 L246.0 357.6 L247.5 357.9 L249.0 357.5 L250.5 357.5 L252.0 357.7 L253.5 357.8 L255.0 358.3 L256.5 357.6 L258.0 357.6 L259.5 357.3 L261.0 357.7 L262.5 356.1 L264.0 356.4 L265.5 358.0 L267.0 356.9 L268.5 357.2 L270.0 358.3 L271.5 357.8 L273.0 357.9 L274.5 358.2 L276.0 356.4 L277.5 357.3 L279.0 358.2 L280.5 357.4 L282.0 357.7 L283.5 357.9 L285.0 357.6 L286.5 357.4 L288.0 357.9 L289.5 358.5 L291.0 357.6 L292.5 357.8 L294.0 357.3 L295.5 357.7 L297.0 357.5 L298.5 358.0 L300.0 357.5 L301.5 358.0 L303.0 357.9 L304.5 357.4 L306.0 357.4 L307.5 357.1 L309.0 357.3 L310.5 357.7 L312.0 357.6 L313.5 358.2 L315.0 358.2 L316.5 357.7 L318.0 357.8 L319.5 357.7 L321.0 358.5 L322.5 357.3 L324.0 358.0 L325.5 357.6 L327.0 357.1 L328.5 356.9 L330.0 357.6 L331.5 357.6 L333.0 357.9 L334.5 357.7 L336.0 357.2 L337.5 357.8 L339.0 357.4 L340.5 357.6 L342.0 357.8 L343.5 357.7 L345.0 357.9 L346.5 357.6 L348.0 357.5 L349.5 357.2 L351.0 357.8 L352.5 357.6 L354.0 357.2 L355.5 357.4 L357.0 357.3 L358.5 357.4 L360.0 358.3 L361.5 356.9 L363.0 357.9 L364.5 357.9 L366.0 357.9 L367.5 357.4 L369.0 357.6 L370.5 358.0 L372.0 357.5 L373.5 357.6 L375.0 357.8 L376.5 357.0 L378.0 358.1 L379.5 358.3 L381.0 357.9 L382.5 357.8 L384.0 357.4 L385.5 358.5 L387.0 357.7 L388.5 356.7 L390.0 355.4 L391.5 357.8 L393.0 357.9 L394.5 357.3 L396.0 357.8 L397.5 357.9 L399.0 358.1 L400.5 358.3 L402.0 357.5 L403.5 357.7 L405.0 357.9 L406.5 357.7 L408.0 358.0 L409.5 357.8 L411.0 357.1 L412.5 358.2 L414.0 357.4 L415.5 358.1 L417.0 358.2 L418.5 357.4 L420.0 357.1 L421.5 356.0 L423.0 357.5 L424.5 358.0 L426.0 358.1 L427.5 357.3 L429.0 357.9 L430.5 357.8 L432.0 357.4 L433.5 357.3 L435.0 358.1 L436.5 358.9 L438.0 357.4 L439.5 357.9 L441.0 357.8 L442.5 357.2 L444.0 357.9 L445.5 357.6 L447.0 358.1 L448.5 358.1 L450.0 357.4 L451.5 358.2 L453.0 357.6 L454.5 358.1 L456.0 356.1 L457.5 358.0 L459.0 357.5 L460.5 357.1 L462.0 357.7 L463.5 357.7 L465.0 357.8 L466.5 358.2 L468.0 357.7 L469.5 357.4 L471.0 357.5 L472.5 357.9 L474.0 357.5 L475.5 357.4 L477.0 358.0 L478.5 357.8 L480.0 357.7 L481.5 357.4 L483.0 357.7 L484.5 358.0 L486.0 358.0 L487.5 357.0 L489.0 357.9 L490.5 358.7 L492.0 357.3 L493.5 357.9 L495.0 357.6 L496.5 357.2 L498.0 357.8 L499.5 357.4 L501.0 357.1 L502.5 358.3 L504.0 357.6 L505.5 357.3 L507.0 357.6 L508.5 357.4 L510.0 357.4 L511.5 358.2 L513.0 357.5 L514.5 357.9 L516.0 357.8 L517.5 357.8 L519.0 357.3 L520.5 357.3 L522.0 357.6 L523.5 358.0 L525.0 357.2 L526.5 357.0 L528.0 357.8 L529.5 357.9 L531.0 357.6 L532.5 357.7 L534.0 357.4 L535.5 357.9 L537.0 357.0 L538.5 358.1 L540.0 357.5 L541.5 358.6 L543.0 357.9 L544.5 358.0 L546.0 357.9 L547.5 357.7 L549.0 358.2 L550.5 357.9 L552.0 358.2 L553.5 357.7 L555.0 357.5 L556.5 358.2 L558.0 357.8 L559.5 358.3 L561.0 357.9 L562.5 357.6 L564.0 358.0 L565.5 357.9 L567.0 357.8 L568.5 357.7 L570.0 357.3 L571.5 357.9 L573.0 357.3 L574.5 357.6 L576.0 358.3 L577.5 357.6 L579.0 358.0 L580.5 357.5 L582.0 357.7 L583.5 357.7 L585.0 358.0 L586.5 358.0 L588.0 355.6 L589.5 357.9 L591.0 357.4 L592.5 357.4 L594.0 358.0 L595.5 357.5 L597.0 357.9 L598.5 358.2 L600.0 357.5 L601.5 358.3 L603.0 357.0 L604.5 357.3 L606.0 358.1 L607.5 357.9 L609.0 357.5 L610.5 358.0 L612.0 358.1 L613.5 358.5 L615.0 357.3 L616.5 357.4 L618.0 357.7 L619.5 358.0 L621.0 357.2 L622.5 357.2 L624.0 358.0 L625.5 358.4 L627.0 358.1 L628.5 357.4 L630.0 358.0 L631.5 357.7 L633.0 357.8 L634.5 357.9 L636.0 357.8 L637.5 357.9 L639.0 358.0 L640.5 357.4 L642.0 357.9 L643.5 358.2 L645.0 357.1 L646.5 357.8 L648.0 358.1 L649.5 357.1 L651.0 358.1 L652.5 357.9 L654.0 357.8 L655.5 357.5 L657.0 358.1 L658.5 358.8 L660.0 357.5 L661.5 358.0 L663.0 357.8 L664.5 357.6 L666.0 357.2 L667.5 357.7 L669.0 357.4 L670.5 356.8 L672.0 357.8 L673.5 357.9 L675.0 357.7 L676.5 357.5 L678.0 357.3 L679.5 358.0 L681.0 357.2 L682.5 357.6 L684.0 357.5 L685.5 357.4 L687.0 357.5 L688.5 357.8 L690.0 358.1 L691.5 357.5 L693.0 357.7 L694.5 358.0 L696.0 357.8 L697.5 357.7 L699.0 358.3 L700.5 356.4 L702.0 357.4 L703.5 357.5 L705.0 357.5 L706.5 357.7 L708.0 358.3 L709.5 358.0 L711.0 357.6 L712.5 356.2 L714.0 358.2 L715.5 357.3 L717.0 357.3 L718.5 357.6 L720.0 357.4 L721.5 357.5 L723.0 357.6 L724.5 357.4 L726.0 357.8 L727.5 357.9 L729.0 358.4 L730.5 357.8 L732.0 357.6 L733.5 357.9 L735.0 357.5 L736.5 357.4 L738.0 357.8 L739.5 357.9 L741.0 358.0 L742.5 357.9 L744.0 357.2 L745.5 357.6 L747.0 357.8 L748.5 358.1 L750.0 357.3 L751.5 357.7 L753.0 357.7 L754.5 357.8 L756.0 357.7 L757.5 357.8 L759.0 357.1 L760.5 358.0 L762.0 356.8 L763.5 358.2 L765.0 357.4 L766.5 357.8 L768.0 357.5 L769.5 358.0 L771.0 357.4 L772.5 357.2 L774.0 358.0 L775.5 357.2 L777.0 356.9 L778.5 358.0 L780.0 357.6 L781.5 357.6 L783.0 357.0 L784.5 357.3 L786.0 357.8 L787.5 357.6 L789.0 358.0 L790.5 358.5 L792.0 358.4 L793.5 357.9 L795.0 357.2 L796.5 357.5 L798.0 357.5 L799.5 357.7 L801.0 358.0 L802.5 357.9 L804.0 357.5 L805.5 358.2 L807.0 358.4 L808.5 357.7 L810.0 358.0 L811.5 357.3 L813.0 357.4 L814.5 357.7 L816.0 356.9 L817.5 357.9 L819.0 357.8 L820.5 357.4 L822.0 357.2 L823.5 357.2 L825.0 357.1 L826.5 357.6 L828.0 357.4 L829.5 357.5 L831.0 357.2 L832.5 357.0 L834.0 357.5 L835.5 356.9 L837.0 357.6 L838.5 356.3 L840.0 356.7 L841.5 356.9 L843.0 356.6 L844.5 357.0 L846.0 356.7 L847.5 357.0 L849.0 356.6 L850.5 356.2 L852.0 354.5 L853.5 356.7 L855.0 356.7 L856.5 356.0 L858.0 356.7 L859.5 356.0 L861.0 357.1 L862.5 357.7 L864.0 357.7 L865.5 357.4 L867.0 358.0 L868.5 357.8 L870.0 357.9 L871.5 357.6 L873.0 357.9 L874.5 357.5 L876.0 357.8 L877.5 357.5 L879.0 357.9 L880.5 357.7 L882.0 358.1 L883.5 357.8 L885.0 357.6 L886.5 357.9 L888.0 357.3 L889.5 357.8 L891.0 358.0 L892.5 357.5 L894.0 357.8 L895.5 357.9 L897.0 358.6 L898.5 357.5 L900.0 357.9 L901.5 357.8 L903.0 358.3 L904.5 357.8 L906.0 357.5 L907.5 356.4 L909.0 357.4 L910.5 357.7 L912.0 358.2 L913.5 356.1 L915.0 357.8 L916.5 357.6 L918.0 357.9 L919.5 358.2 L921.0 358.0 L922.4 357.7 M922.9 233.0 L923.3 229.0 L924.2 227.2 L925.0 226.8 L926.0 226.8 L927.5 226.4 L929.0 226.5 L930.5 226.7 L932.0 227.3 L933.5 227.3 L935.0 227.5 L936.5 226.9 L938.0 228.3 L939.5 226.3 L941.0 226.4 L942.5 227.5 L944.0 226.4 L945.5 226.6 L947.0 226.6 L948.5 226.1 L950.0 226.0 L951.5 226.8 L953.0 226.2 L954.5 226.9 L956.0 226.6 L957.5 226.4 L959.0 226.5 L960.5 226.9 L962.0 226.4 L963.5 226.8 L965.0 227.1 L966.5 225.6 L968.0 227.2 L969.5 226.4 L971.0 227.1 L972.5 226.6 L974.0 226.0 L975.5 226.2 L977.0 226.1 L978.5 226.2 L980.0 226.5 L981.5 226.0 L983.0 227.0 L984.5 226.7 L986.0 227.1 L987.5 227.3 L989.0 228.6 L990.5 227.2 L992.0 227.2 L993.5 225.7 L995.0 226.5 L996.5 225.3 L998.0 226.6 L999.5 226.5 L1001.0 227.0 L1002.5 226.8 L1004.0 226.6 L1005.5 226.2 L1007.0 227.9 L1008.5 226.9 L1010.0 227.0 L1011.5 226.1 L1013.0 226.2 L1014.5 226.7 L1016.0 226.7 L1017.5 226.7 L1019.0 226.4 L1020.5 226.7 L1022.0 227.1 L1023.5 227.1 L1025.0 226.3 L1026.5 226.5 L1028.0 227.1 L1029.5 226.6 L1031.0 227.2 L1032.5 227.0 L1034.0 226.5 L1035.5 226.7 L1037.0 226.7 L1038.5 226.6 L1040.0 226.5 L1041.5 226.7 L1043.0 226.1 L1044.5 227.4 L1046.0 226.3 L1047.5 225.9 L1049.0 226.5 L1050.5 226.3 L1052.0 226.7 L1053.5 226.3 L1055.0 226.9 L1056.5 226.0 L1058.0 226.4 L1059.5 226.1 L1061.0 227.3 L1062.5 226.0 L1064.0 226.6 L1065.5 226.8 L1067.0 225.7 L1068.5 227.1 L1070.0 226.9 L1071.5 226.1 L1073.0 227.7 L1074.5 226.9 L1076.0 226.2 L1077.5 226.7 L1079.0 226.4 L1080.5 226.5 L1082.0 226.2 L1083.5 226.6 L1085.0 226.7 L1086.5 226.6 L1088.0 226.8 L1089.5 227.0 L1091.0 226.4 L1092.5 226.6 L1094.0 227.0 L1095.5 226.3 L1097.0 226.2 L1098.5 226.6 L1100.0 226.5 L1101.5 226.1 L1103.0 226.8 L1104.5 226.7 L1106.0 226.9 L1107.5 226.4 L1109.0 226.6 L1110.5 227.3 L1112.0 227.2 L1113.5 227.0 L1115.0 227.1 L1116.5 226.7 L1118.5 227.0 L1119.0 231.5 L1119.6 227.2 L1123.5 227.0" stroke="#e8e400" stroke-width="2" fill="none" stroke-linejoin="round"/>
<path d="M922.6 358.2V232" stroke="#c0a800" stroke-width="1.1" fill="none"/>
<path d="M1123.6 352.4H1129" stroke="#ffff00" stroke-width="1"/>
<rect x="1128.4" y="346.2" width="20.6" height="12.4" fill="#ffff00"/>
<text x="1138.8" y="356.2" font-family='"Liberation Sans", sans-serif' font-weight="bold" font-size="10.5" text-anchor="middle" fill="#000">1</text>
<path d="M1123.6 373.4H1129" stroke="#00ff00" stroke-width="1"/>
<rect x="1128.4" y="367.2" width="20.6" height="12.4" fill="#00ff00"/>
<text x="1138.8" y="377.2" font-family='"Liberation Sans", sans-serif' font-weight="bold" font-size="10.5" text-anchor="middle" fill="#000">2</text>
<path d="M1123.6 452.3H1129" stroke="#00ffff" stroke-width="1"/>
<rect x="1128.4" y="446.1" width="20.6" height="12.4" fill="#00ffff"/>
<text x="1138.8" y="456.1" font-family='"Liberation Sans", sans-serif' font-weight="bold" font-size="10.5" text-anchor="middle" fill="#000">3</text>
<rect x="367.8" y="613.3" width="551.2" height="3.4" fill="#e6e6e6"/>
<path d="M371.2 623.5V626.4M387.8 623.5V626.4M404.4 623.5V626.4M421.1 623.5V626.4M437.7 623.5V626.4M454.3 623.5V626.4M470.9 623.5V626.4M487.5 623.5V626.4M504.2 623.5V626.4M520.8 623.5V626.4M537.4 623.5V626.4M554.0 623.5V626.4M570.6 623.5V626.4M587.3 623.5V626.4M603.9 623.5V626.4M620.5 623.5V626.4M637.1 623.5V626.4M653.7 623.5V626.4M670.4 623.5V626.4M687.0 623.5V626.4M703.6 623.5V626.4M720.2 623.5V626.4M736.8 623.5V626.4M753.5 623.5V626.4M770.1 623.5V626.4M786.7 623.5V626.4M803.3 623.5V626.4M819.9 623.5V626.4M836.6 623.5V626.4M853.2 623.5V626.4M869.8 623.5V626.4M886.4 623.5V626.4M903.0 623.5V626.4M915.2 623.5V626.4" stroke="#a0a0a0" stroke-width="1" fill="none"/>
<path d="M547.9 609.5H555.9V619L551.9 623L547.9 619Z" fill="#0078d7"/>
<circle cx="22.9" cy="626.2" r="13.4" fill="url(#gd)" stroke="#1a1a22" stroke-width="0.8"/>
<g fill="#8c909c"><rect x="15.2" y="622.6" width="15.6" height="9.6" rx="0.8"/><rect x="20.6" y="620.6" width="4.6" height="2.4"/><circle cx="22.9" cy="630.2" r="4.6"/></g><circle cx="22.9" cy="629.2" r="3.3" fill="#8c909c" stroke="#14181e" stroke-width="1.1"/><path d="M19.9 628.4 a3 3 0 0 1 6 0z" fill="#f4f4f4"/><path d="M22.9 615.4V619.6M17 616.6L19.6 620.2M28.8 616.6L26.2 620.2" stroke="#9a9ca6" stroke-width="1"/>
<circle cx="69.2" cy="626.2" r="13.4" fill="url(#gd)" stroke="#1a1a22" stroke-width="0.8"/>
<rect x="62.3" y="619.8" width="14.2" height="13.9" fill="#898d9a"/>
<circle cx="115.5" cy="626.5" r="15.0" fill="#2e2068"/><circle cx="115.5" cy="626.5" r="14.3" fill="url(#gw)" stroke="#6a5cb4" stroke-width="0.7"/>
<path d="M110 619.2L124.4 626.6L110 634Z" fill="url(#gg)"/>
<circle cx="161.8" cy="626.2" r="13.4" fill="url(#gd)" stroke="#1a1a22" stroke-width="0.8"/>
<circle cx="162" cy="626.6" r="7.1" fill="#858a98"/>
<circle cx="299.9" cy="626.5" r="15.0" fill="#2e2068"/><circle cx="299.9" cy="626.5" r="14.3" fill="url(#gw)" stroke="#6a5cb4" stroke-width="0.7"/>
<path d="M307 618.2V634.8L298.6 626.5Z M300 618.2L291.2 626.5L300 634.8V630.4L296 626.5L300 622.6Z" fill="#3f5a8c"/>
<circle cx="346.1" cy="626.5" r="15.0" fill="#2e2068"/><circle cx="346.1" cy="626.5" r="14.3" fill="url(#gw)" stroke="#6a5cb4" stroke-width="0.7"/>
<path d="M349.8 618.1V634.5L340.4 626.3Z" fill="#3f5a8c"/>
<circle cx="940.6" cy="626.5" r="15.0" fill="#2e2068"/><circle cx="940.6" cy="626.5" r="14.3" fill="url(#gw)" stroke="#6a5cb4" stroke-width="0.7"/>
<path d="M937 617.8V634.8L946.4 626.3Z" fill="#3f5a8c"/>
<circle cx="986.9" cy="626.5" r="15.0" fill="#2e2068"/><circle cx="986.9" cy="626.5" r="14.3" fill="url(#gw)" stroke="#6a5cb4" stroke-width="0.7"/>
<path d="M980 618.2V634.8L988.6 626.5Z M987.6 618.2L996.4 626.5L987.6 634.8V630.4L991.6 626.5L987.6 622.6Z" fill="#3f5a8c"/>
<circle cx="1033.2" cy="626.4" r="13.9" fill="url(#gd2)" stroke="#f2d400" stroke-width="1.4"/>
<g><path d="M1025.6 626V634.2H1041V619.4H1034" fill="none" stroke="#e4e8f2" stroke-width="1.3"/><rect x="1025" y="633" width="16.6" height="1.9" fill="#f0f2f8"/><rect x="1035" y="619" width="6" height="4.2" fill="#8c8e98"/><path d="M1027 627.6H1030.4V632.6H1027Z" fill="#0c2a50"/><path d="M1025.2 618.8H1033L1030.5 621.3L1039.6 630.2L1036.3 633.4L1027.5 624.4L1025.2 626.8Z" fill="#e2e8f6" stroke="#05080f" stroke-width="0.8" stroke-linejoin="round"/><path d="M1025.2 618.8H1033L1030.4 621.6L1027.8 624.2L1025.2 626.8Z" fill="#eef2fb"/></g>
<circle cx="1125.8" cy="626.5" r="15.0" fill="#2e2068"/><circle cx="1125.8" cy="626.5" r="14.3" fill="url(#gw)" stroke="#6a5cb4" stroke-width="0.7"/>
<circle cx="1122" cy="623.2" r="5.2" fill="#fff" fill-opacity="0.5" stroke="#3f5a8c" stroke-width="2"/><path d="M1126 627.4L1132 633.4" stroke="#3f5a8c" stroke-width="3.2" stroke-linecap="round"/>
<path d="M1068 32.5H1076.2" stroke="#222" stroke-width="0.9"/>
<rect x="1101.3" y="30" width="6" height="5.8" fill="#fff" stroke="#222" stroke-width="0.9"/><path d="M1103 30V28.4H1108.8V34H1107.4" fill="none" stroke="#555" stroke-width="0.9"/>
<path d="M1134 28.3L1142 36.1M1142 28.3L1134 36.1" stroke="#222" stroke-width="0.9"/>
<rect x="1.3" y="27" width="11.7" height="11.7" rx="1.4" fill="url(#gapp)"/><path d="M1.6 31.8L5.4 28.6L6.6 32L9.9 29.5L12.8 30.4" stroke="#fff" stroke-width="1.25" fill="none" stroke-linejoin="round"/><path d="M1.6 35.6L4.6 33.6L6.5 36.6L9 33.9L12.8 33.5" stroke="#fff" stroke-width="1.2" fill="none" stroke-linejoin="round"/>
<path d="M10 47.6V46.3H15V47.6" fill="none" stroke="#cfcfcf" stroke-width="0.9"/><path d="M4.5 51L6 47.5H18.2L19.7 51Z" fill="#ff2a2a"/><path d="M4.5 51H19.7V56.8C19.7 57.3 19.3 57.7 18.8 57.7H5.4C4.9 57.7 4.5 57.3 4.5 56.8Z" fill="url(#gredh)"/><path d="M4.6 51H19.6" stroke="#9a0000" stroke-width="0.6"/><rect x="11.5" y="49.8" width="1.5" height="2.2" rx="0.4" fill="#c8c8d0"/>
<path d="M88.5 44V61" stroke="#e08a00" stroke-width="1.1"/><path d="M91.9 44V56" stroke="#a86400" stroke-width="1.7"/><path d="M82 47.5L85 44.3L87.4 46V49L85 50.8Z" fill="url(#gdia)"/><path d="M98.5 47.5L95.5 44.3L93 46V49L95.5 50.8Z" fill="url(#gdia)"/><path d="M82 55.6L86 51.7L92 57L98.3 50.9" stroke="#48aee6" stroke-width="1.6" fill="none" stroke-linejoin="round"/><path d="M82 59.4H86.6M94 59.4H98.2" stroke="#3aa0dc" stroke-width="1.7"/><rect x="87.4" y="58" width="2.3" height="3" fill="#ffb400"/><rect x="90.9" y="58" width="2.3" height="3" fill="#ffb400"/>
<path d="M176.5 44.2L180.5 49.1H178.5V55.6C178.5 57.2 179.4 58 180.8 58.2V60C177.2 60 174.9 58.6 174.9 56V49.1H172Z" fill="url(#ggr)" stroke="#3cb828" stroke-width="0.5"/><path d="M182.4 60.7L179.1 55.4H180.7V48.8C180.7 47.4 179.8 46.6 178 46.4V44.8C181.6 44.8 184 46 184 48.6V55.4H187Z" fill="url(#gbl)" stroke="#2a7ae0" stroke-width="0.5"/>
<path d="M263.7 46C263.7 45.4 264.1 45 264.7 45H267.5C268 45 268.4 45.3 268.6 45.8L269 47H275C275.6 47 276 47.4 276 48V57.8C276 58.3 275.6 58.7 275 58.7H264.7C264.1 58.7 263.7 58.3 263.7 57.8Z" fill="#ffd43a"/><path d="M262.4 51.2C262.4 50.7 262.8 50.3 263.3 50.3H273.2C273.8 50.3 274.3 50.8 274.4 51.4L275 57.8C275 58.3 274.6 58.7 274 58.7H263.6C263 58.7 262.6 58.3 262.6 57.8Z" fill="url(#gfold)"/><path d="M263 50.4H273.4C274 50.4 274.3 50.8 274.4 51.4L275 58" stroke="#f0a208" stroke-width="0.7" fill="none"/>
<g transform="translate(324.4 45)"><rect x="0" y="5.4" width="15.3" height="10.2" rx="0.6" fill="url(#gtray)"/><path d="M3.7 0.2H9.4L11.5 2.3V9.6H3.7Z" fill="#f2f4f8" stroke="#2a80d8" stroke-width="1"/><path d="M9.2 0.4V2.6H11.4" fill="#9fd0ff" stroke="#2a80d8" stroke-width="0.6"/><path d="M5.2 3.5H8M5.2 6.9H10" stroke="#5a5e66" stroke-width="1.3"/><path d="M5.2 5.2H10" stroke="#c0c4cc" stroke-width="0.7"/></g>
<g transform="translate(393.2 45)"><rect x="0" y="5.4" width="15.3" height="10.2" rx="0.6" fill="url(#gtray)"/><path d="M3.7 0.2H9.4L11.5 2.3V9.6H3.7Z" fill="#f2f4f8" stroke="#2a80d8" stroke-width="1"/><path d="M9.2 0.4V2.6H11.4" fill="#9fd0ff" stroke="#2a80d8" stroke-width="0.6"/><path d="M5.2 3.5H8M5.2 6.9H10" stroke="#5a5e66" stroke-width="1.3"/><path d="M5.2 5.2H10" stroke="#c0c4cc" stroke-width="0.7"/></g>
<path d="M11.2 656.3L16.3 655.5V660H11.2ZM17.2 655.4L23.4 654.5V660H17.2ZM11.2 660.8H16.3V665.3L11.2 664.6ZM17.2 660.8H23.4V666.3L17.2 665.4Z" fill="#000"/>
<rect x="46.5" y="657" width="7.1" height="6.2" fill="#fafafa"/><path d="M46.5 654.9V665.7M53.6 654.9V665.7" stroke="#111" stroke-width="1.1" fill="none"/><path d="M46.5 656.9H53.6M46.5 663.3H53.6" stroke="#111" stroke-width="1.3" fill="none"/><path d="M56.5 655V657.2M56.5 660.4V666" stroke="#222" stroke-width="0.75"/><circle cx="56.6" cy="658.8" r="1.2" fill="#000"/>
<ellipse cx="87.6" cy="660.6" rx="7.6" ry="4.4" transform="rotate(-15 87.6 660.6)" fill="none" stroke="#f4b0b0" stroke-width="0.7"/><ellipse cx="89" cy="657.7" rx="8.2" ry="4.5" transform="rotate(-15 89 657.7)" fill="#f4f0f0" stroke="#ec4848" stroke-width="1"/><path d="M85.4 658L91.6 661.2M89.6 655.4L90.6 661.6" stroke="#808088" stroke-width="0.9"/><ellipse cx="91.8" cy="665.4" rx="1.3" ry="2.3" fill="none" stroke="#1a88d8" stroke-width="1.3" transform="rotate(10 91.8 665.4)"/><ellipse cx="95.2" cy="663.5" rx="2.1" ry="1.4" fill="none" stroke="#1a88d8" stroke-width="1.3" transform="rotate(20 95.2 663.5)"/><circle cx="91.6" cy="662.2" r="1" fill="#1a88d8"/>
<path d="M116.6 654H122L123.2 655.4H132.4V666.6H116.6Z" fill="#f0b428"/><path d="M116.6 656.4H132.4V666.6H116.6Z" fill="#ffd968"/><path d="M119.4 661H129.6V666.6H126.6V663.6H122.4V666.6H119.4Z" fill="#2a86d8"/>
<rect x="151.6" y="652.3" width="17" height="17" fill="#3a2418"/>
<rect x="152.00" y="652.70" width="4.1" height="4.1" fill="#7a4a2a"/>
<rect x="156.10" y="652.70" width="4.1" height="4.1" fill="#fff000"/>
<rect x="160.20" y="652.70" width="4.1" height="4.1" fill="#f08428"/>
<rect x="164.30" y="652.70" width="4.1" height="4.1" fill="#e8203a"/>
<rect x="152.00" y="656.80" width="4.1" height="4.1" fill="#fff000"/>
<rect x="156.10" y="656.80" width="4.1" height="4.1" fill="#f08428"/>
<rect x="160.20" y="656.80" width="4.1" height="4.1" fill="#e8203a"/>
<rect x="164.30" y="656.80" width="4.1" height="4.1" fill="#7a4a2a"/>
<rect x="152.00" y="660.90" width="4.1" height="4.1" fill="#f08428"/>
<rect x="156.10" y="660.90" width="4.1" height="4.1" fill="#e8203a"/>
<rect x="160.20" y="660.90" width="4.1" height="4.1" fill="#7a4a2a"/>
<rect x="164.30" y="660.90" width="4.1" height="4.1" fill="#fff000"/>
<rect x="152.00" y="665.00" width="4.1" height="4.1" fill="#e8203a"/>
<rect x="156.10" y="665.00" width="4.1" height="4.1" fill="#7a4a2a"/>
<rect x="160.20" y="665.00" width="4.1" height="4.1" fill="#fff000"/>
<rect x="164.30" y="665.00" width="4.1" height="4.1" fill="#f08428"/>
<circle cx="195" cy="659.9" r="7.9" fill="#aca6e6"/><ellipse cx="194.4" cy="656.6" rx="5.4" ry="3.6" fill="#d4d0f8"/><ellipse cx="195" cy="664.6" rx="5" ry="2" fill="#cfcaf4"/><path d="M187.6 661.6C189 657.6 190.4 663.4 192 660.2S194.6 656.6 196 661.2S199.4 658.4 200.2 661.4L202.6 659.6" stroke="#14142c" stroke-width="1.5" fill="none"/><path d="M187.6 666.8H202.6" stroke="#26263e" stroke-width="1.4"/>
<path d="M230.40 656.50L238.01 656.50A8.60 8.60 0 0 0 223.13 655.91L226.94 662.50A4.00 4.00 0 0 1 230.40 656.50Z" fill="#e94235"/>
<path d="M233.86 662.50L230.06 669.09A8.60 8.60 0 0 0 238.01 656.50L230.40 656.50A4.00 4.00 0 0 1 233.86 662.50Z" fill="#fbbc05"/>
<path d="M226.94 662.50L223.13 655.91A8.60 8.60 0 0 0 230.06 669.09L233.86 662.50A4.00 4.00 0 0 1 226.94 662.50Z" fill="#32a651"/>
<circle cx="230.4" cy="660.5" r="4.25" fill="#fff"/><circle cx="230.4" cy="660.5" r="3.4" fill="#3f84f2"/>
<rect x="256.9" y="651.9" width="17.6" height="17.1" fill="#fff"/><ellipse cx="265.6" cy="660.3" rx="8" ry="5.3" fill="#fafafa" stroke="#a8a0a0" stroke-width="0.9"/><ellipse cx="265.4" cy="660.3" rx="7.4" ry="4.7" fill="none" stroke="#d05050" stroke-width="0.6"/><path d="M259.8 660.4H271.4" stroke="#2a2a2a" stroke-width="2.6"/><circle cx="265.2" cy="659.9" r="1.7" fill="#e01818"/><path d="M261 663.2H270" stroke="#8a4040" stroke-width="0.7"/>
<rect x="293.2" y="654.4" width="14.7" height="12.7" fill="#86bee8"/><rect x="294" y="655.1" width="11.2" height="11.3" fill="#a6d2f4"/><rect x="305.4" y="654.8" width="2.2" height="12" fill="#98c8ee"/><circle cx="299.4" cy="660.8" r="4.6" fill="#f08212"/><path d="M297.7 657.8L302.4 660.8L297.7 663.8Z" fill="#fff"/>
<rect x="328" y="651.8" width="17.3" height="17.3" rx="1.6" fill="url(#gapp)"/><path d="M328.3 656.8C331 656.4 332.4 654.2 333.6 654.2C335 654.2 335.8 660 337 660C338.6 660 340 657.4 342 657.2L345.2 657" stroke="#fff" stroke-width="1.7" fill="none"/><path d="M328.3 663.8C329.8 663.4 330.6 661.2 331.6 661.2C333 661.2 333.6 667 334.8 667C336.4 667 337.6 664.4 339.5 664.2L345.2 663.8" stroke="#fff" stroke-width="1.7" fill="none"/>
<path d="M946.6 665.6C944.4 665.6 943 664.2 943 662.4C943 660.6 944.6 659.4 946.4 659.6C946.8 657 948.8 655.4 951.2 655.4C953.6 655.4 955.4 656.8 956 659C958.4 658.8 960.2 660.2 960.2 662.4C960.2 664.2 958.8 665.6 956.8 665.6Z" fill="url(#gcloud)" stroke="#92b2ec" stroke-width="0.7"/><circle cx="958" cy="654" r="2.1" fill="#c82818"/>
<path d="M1036.8 662.8L1041.1 658.4L1045.4 662.8" fill="none" stroke="#222" stroke-width="1"/>
<rect x="1055" y="657.4" width="5.4" height="5.6" rx="1" fill="none" stroke="#333" stroke-width="0.9"/><path d="M1060.6 659.4L1062.6 658.4V662.2L1060.6 661.2" fill="none" stroke="#333" stroke-width="0.9"/><path d="M1055.4 655.8C1056.8 654.4 1059.6 654.4 1061 655.8M1055.4 664.8C1056.8 666.2 1059.6 666.2 1061 664.8" fill="none" stroke="#333" stroke-width="0.8"/>
<path d="M1126.2 654.8H1137.7V663.7H1131.6L1129.4 665.8V663.7H1126.2Z" fill="#000"/><path d="M1128.2 657H1135.8M1128.2 659.2H1135.8M1128.2 661.4H1133" stroke="#fff" stroke-width="1"/><circle cx="1137.3" cy="665.7" r="5.2" fill="#dcdcdc" stroke="#8a8a8a" stroke-width="0.8"/>
<text x="1137.2" y="668.5" font-family='"Liberation Sans", sans-serif' font-size="8" text-anchor="middle" fill="#000">1</text>
</svg>
</div></body></html>
